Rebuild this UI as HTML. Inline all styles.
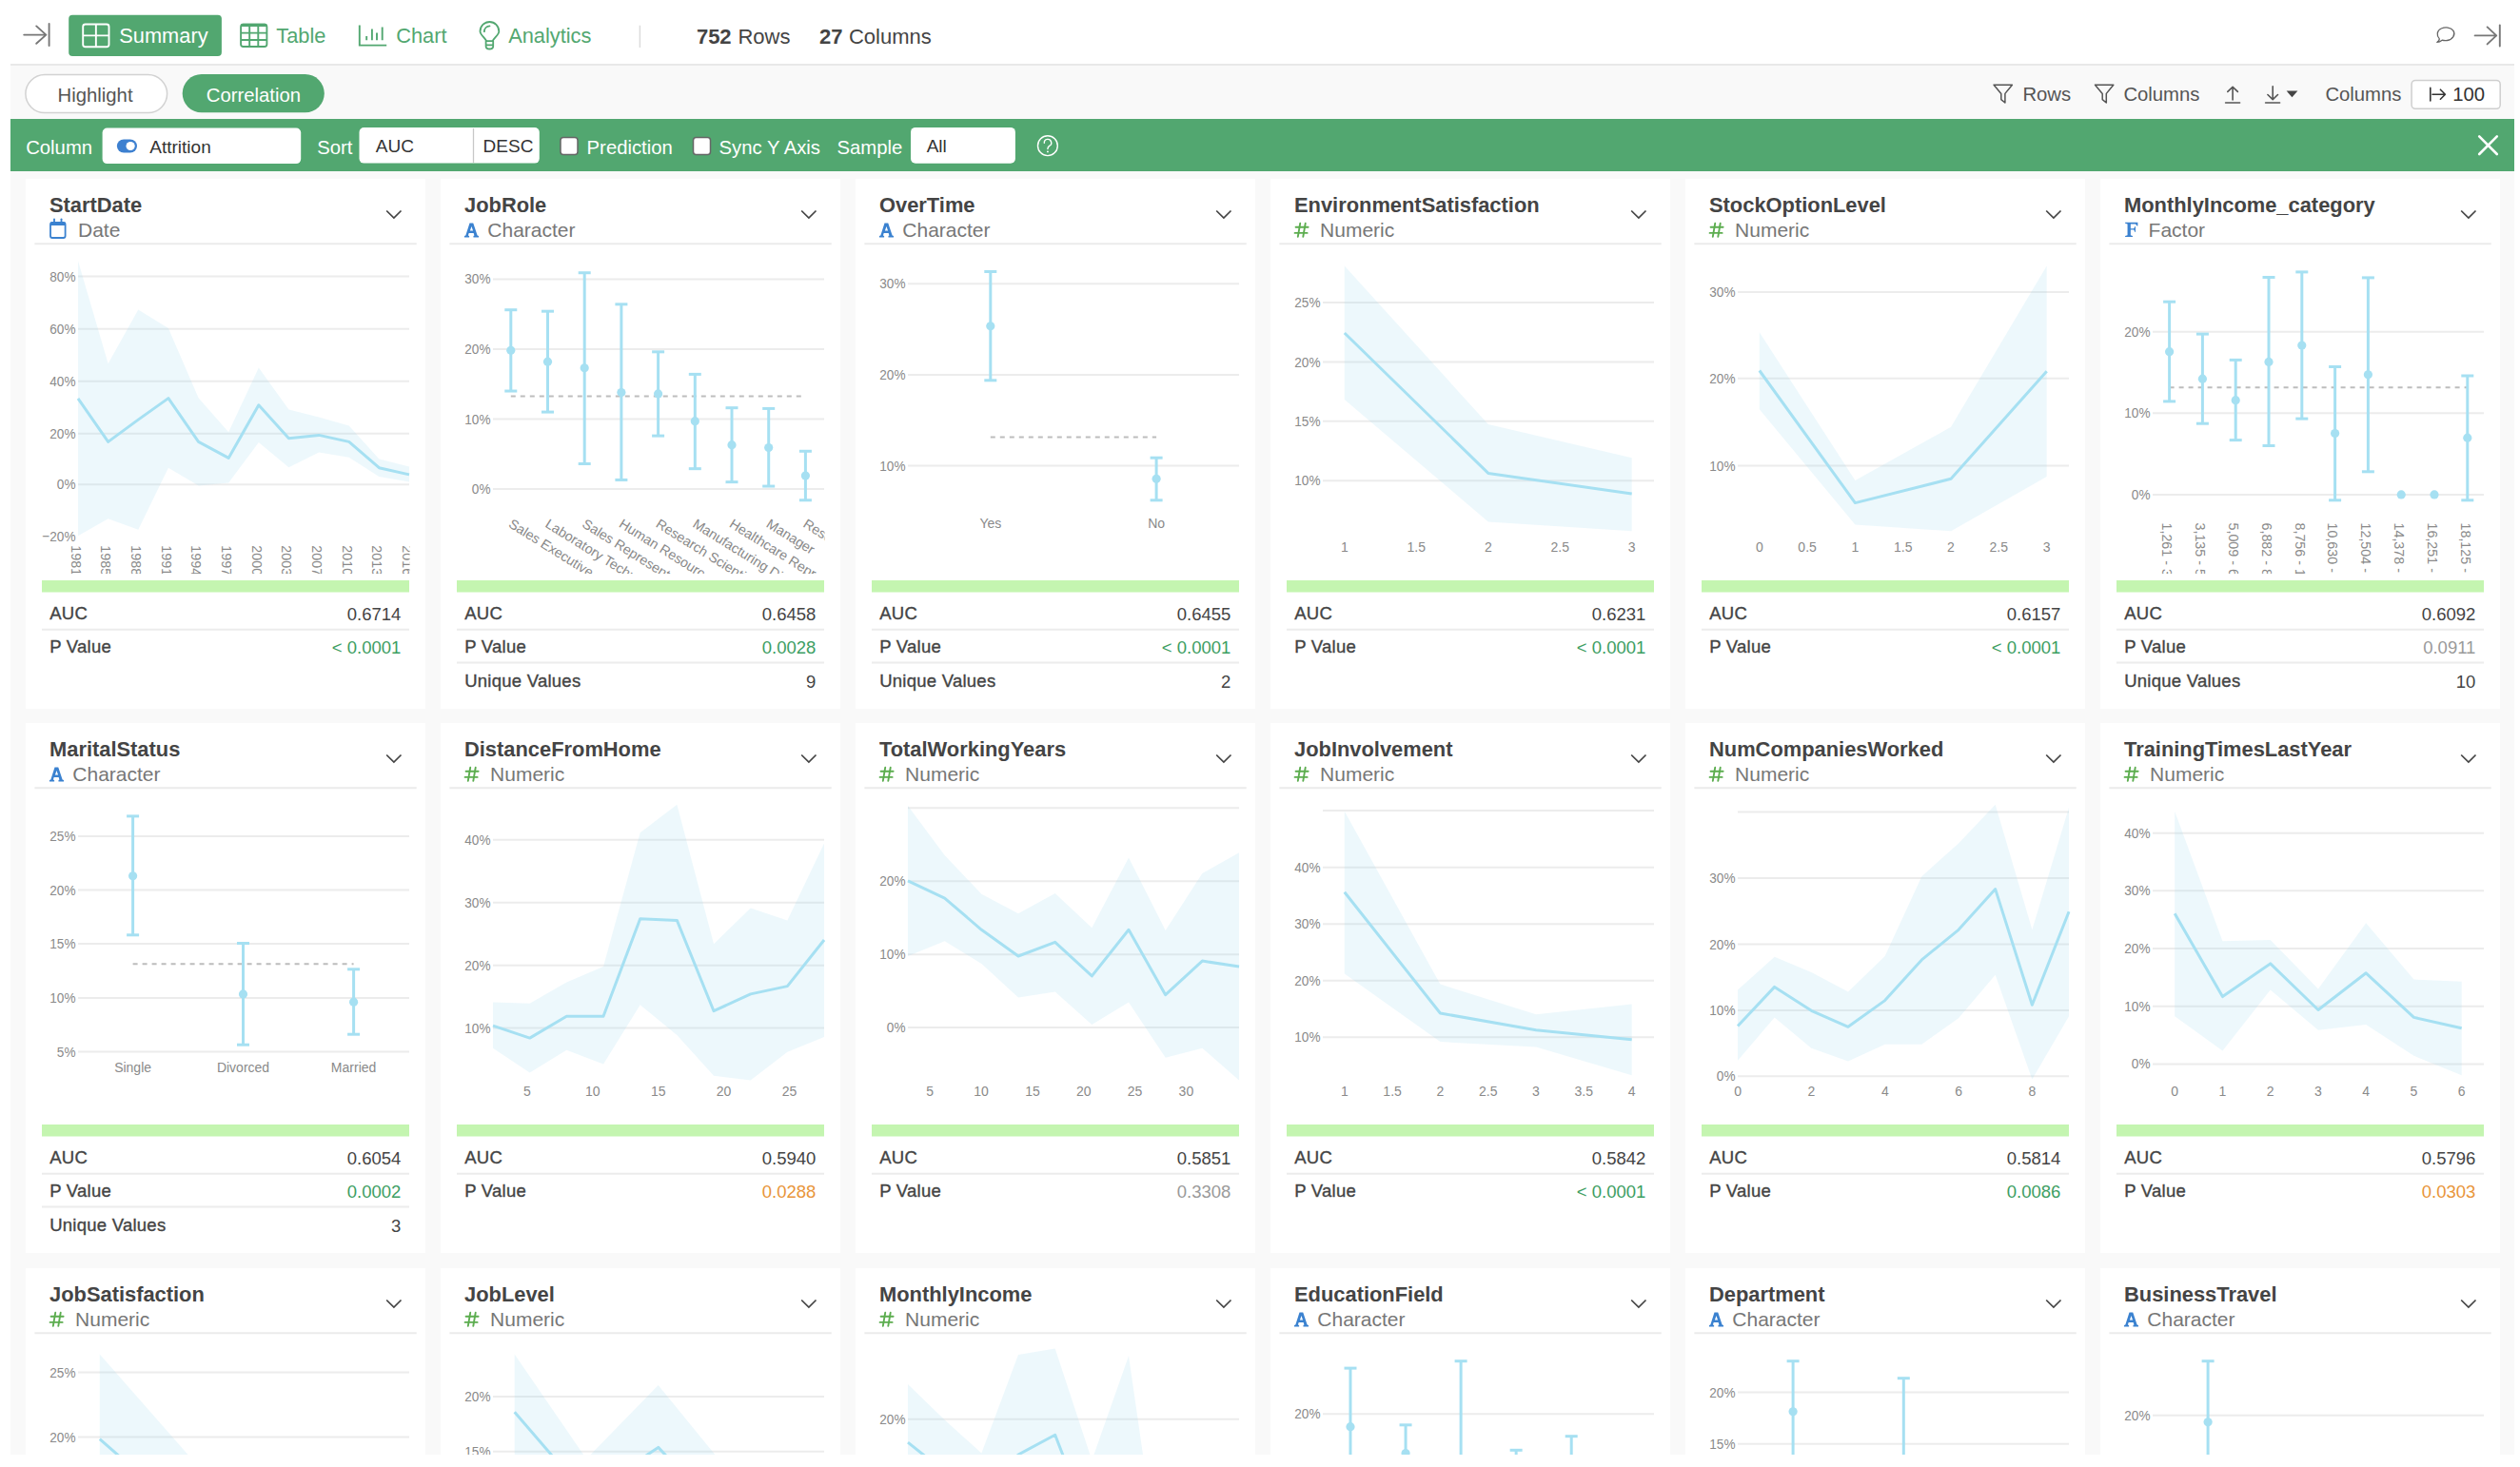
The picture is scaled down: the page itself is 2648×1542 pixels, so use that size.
<!DOCTYPE html>
<html><head><meta charset="utf-8"><title>Summary - Correlation</title>
<style>
html,body{margin:0;padding:0;background:#fff;width:2648px;height:1542px;overflow:hidden;}
body{position:relative;font-family:"Liberation Sans", sans-serif;}
svg text{font-family:"Liberation Sans", sans-serif;}
.ov{position:absolute;left:0;top:0;}
#topline{position:absolute;left:11px;top:67px;width:2631px;height:2px;background:#e8e8e8;}
#area{position:absolute;left:11px;top:69px;width:2631px;height:1460px;background:#f9f9f9;overflow:hidden;}
#gbar{position:absolute;left:11px;top:125px;width:2631px;height:55px;background:#52a770;}
#cards{position:absolute;left:0;top:0;width:2648px;height:1529px;overflow:hidden;}
.card{position:absolute;width:420px;height:557px;background:#fff;}
.card svg{position:absolute;left:0;top:0;}
.lab{stroke:#444;stroke-width:0.35px;letter-spacing:0.25px;}
</style></head><body>
<div id="area"></div>
<div id="topline"></div>
<div id="gbar"></div>
<div id="cards"><div class="card" style="left:27px;top:188px"><svg width="420" height="557" viewBox="0 0 420 557"><defs><clipPath id="c0"><rect x="0" y="70" width="410" height="345"/></clipPath><clipPath id="c0r"><rect x="0" y="70" width="403.5" height="345"/></clipPath></defs><text x="0" y="0" font-size="22.8" fill="#444" font-weight="bold" transform="translate(25.0 34.6) scale(0.96 1)">StartDate</text><g fill="none" stroke="#3b82d0"><rect x="26" y="46" width="15.6" height="16" rx="2" stroke-width="1.8"/><line x1="26" y1="47.3" x2="41.6" y2="47.3" stroke-width="3.4"/><line x1="30" y1="42.3" x2="30" y2="46" stroke-width="1.8" stroke-linecap="round"/><line x1="37.5" y1="42.3" x2="37.5" y2="46" stroke-width="1.8" stroke-linecap="round"/></g><text x="55" y="60.6" font-size="21" fill="#777" text-anchor="start" font-weight="normal">Date</text><polyline points="379.2,33.5 386.9,41.1 394.5,33.5" fill="none" stroke="#444" stroke-width="1.7"/><line x1="9.4" y1="68.3" x2="410.7" y2="68.3" stroke="#ebebeb" stroke-width="2"/><g clip-path="url(#c0)"><line x1="55" y1="102.5" x2="403" y2="102.5" stroke="#ececec" stroke-width="2"/><text x="0" y="0" font-size="13.6" fill="#8a8a8a" text-anchor="end" transform="translate(52.5 107.5) scale(1 1.12)">80%</text><line x1="55" y1="157.7" x2="403" y2="157.7" stroke="#ececec" stroke-width="2"/><text x="0" y="0" font-size="13.6" fill="#8a8a8a" text-anchor="end" transform="translate(52.5 162.7) scale(1 1.12)">60%</text><line x1="55" y1="212.7" x2="403" y2="212.7" stroke="#ececec" stroke-width="2"/><text x="0" y="0" font-size="13.6" fill="#8a8a8a" text-anchor="end" transform="translate(52.5 217.7) scale(1 1.12)">40%</text><line x1="55" y1="267.7" x2="403" y2="267.7" stroke="#ececec" stroke-width="2"/><text x="0" y="0" font-size="13.6" fill="#8a8a8a" text-anchor="end" transform="translate(52.5 272.7) scale(1 1.12)">20%</text><line x1="55" y1="321.3" x2="403" y2="321.3" stroke="#ececec" stroke-width="2"/><text x="0" y="0" font-size="13.6" fill="#8a8a8a" text-anchor="end" transform="translate(52.5 326.3) scale(1 1.12)">0%</text><text x="0" y="0" font-size="13.6" fill="#8a8a8a" text-anchor="end" transform="translate(52.5 381.3) scale(1 1.12)">−20%</text><polygon points="55,86.2 86.64,194.2 118.27,137.4 149.91,157.1 181.55,230.2 213.18,266.2 244.82,198.5 276.45,242.6 308.09,250.4 339.73,259.6 371.36,294.5 403,302.6 403,318.5 371.36,313.1 339.73,292.8 308.09,287.5 276.45,303.2 244.82,277.1 213.18,319.6 181.55,322.4 149.91,303.7 118.27,368.7 86.64,357.3 55,375.2" fill="rgba(163,220,239,0.2)"/><polyline points="55,230.8 86.64,276.4 118.27,253.1 149.91,230.6 181.55,276.4 213.18,293.4 244.82,237.8 276.45,272.7 308.09,269.4 339.73,276.4 371.36,303.7 403,310.9" fill="none" stroke="#a6e0f2" stroke-width="3" stroke-linejoin="round"/><g clip-path="url(#c0r)"><text x="0" y="0" font-size="14.3" fill="#8a8a8a" transform="translate(47.8 385.3) rotate(90)">1981-01</text><text x="0" y="0" font-size="14.3" fill="#8a8a8a" transform="translate(79.44 385.3) rotate(90)">1985-01</text><text x="0" y="0" font-size="14.3" fill="#8a8a8a" transform="translate(111.07 385.3) rotate(90)">1988-01</text><text x="0" y="0" font-size="14.3" fill="#8a8a8a" transform="translate(142.71 385.3) rotate(90)">1991-01</text><text x="0" y="0" font-size="14.3" fill="#8a8a8a" transform="translate(174.35 385.3) rotate(90)">1994-01</text><text x="0" y="0" font-size="14.3" fill="#8a8a8a" transform="translate(205.98 385.3) rotate(90)">1997-01</text><text x="0" y="0" font-size="14.3" fill="#8a8a8a" transform="translate(237.62 385.3) rotate(90)">2000-01</text><text x="0" y="0" font-size="14.3" fill="#8a8a8a" transform="translate(269.25 385.3) rotate(90)">2003-01</text><text x="0" y="0" font-size="14.3" fill="#8a8a8a" transform="translate(300.89 385.3) rotate(90)">2007-01</text><text x="0" y="0" font-size="14.3" fill="#8a8a8a" transform="translate(332.53 385.3) rotate(90)">2010-01</text><text x="0" y="0" font-size="14.3" fill="#8a8a8a" transform="translate(364.16 385.3) rotate(90)">2013-01</text><text x="0" y="0" font-size="14.3" fill="#8a8a8a" transform="translate(395.8 385.3) rotate(90)">2016-01</text></g></g><rect x="17" y="422" width="386" height="12.5" fill="#c4f5b0"/><text x="25.2" y="462.8" font-size="18.5" fill="#444" text-anchor="start" font-weight="normal" class="lab">AUC</text><text x="394.4" y="464.2" font-size="18.5" fill="#444" text-anchor="end" font-weight="normal">0.6714</text><line x1="17" y1="473.8" x2="403" y2="473.8" stroke="#ececec" stroke-width="2"/><text x="25.2" y="497.5" font-size="18.5" fill="#444" text-anchor="start" font-weight="normal" class="lab">P Value</text><text x="394.4" y="498.8" font-size="18.5" fill="#3d9e63" text-anchor="end" font-weight="normal">&lt; 0.0001</text></svg></div><div class="card" style="left:463px;top:188px"><svg width="420" height="557" viewBox="0 0 420 557"><defs><clipPath id="c1"><rect x="0" y="70" width="410" height="345"/></clipPath><clipPath id="c1r"><rect x="0" y="70" width="403.5" height="345"/></clipPath></defs><text x="0" y="0" font-size="22.8" fill="#444" font-weight="bold" transform="translate(25.0 34.6) scale(0.96 1)">JobRole</text><path d="M30.49 46.52 L34.26 46.52 L38.63 59.42 L40.02 60.02 L40.02 61.4 L34.46 61.4 L34.46 60.02 L35.45 59.42 L34.66 57.04 L29.7 57.04 L28.9 59.42 L30.1 60.02 L30.1 61.4 L24.94 61.4 L24.94 60.02 L26.33 59.42 Z M32.48 50.1 L34.06 54.46 L30.89 54.46 Z" fill="#3b82d0" fill-rule="evenodd"/><text x="49.3" y="60.6" font-size="21" fill="#777" text-anchor="start" font-weight="normal">Character</text><polyline points="379.2,33.5 386.9,41.1 394.5,33.5" fill="none" stroke="#444" stroke-width="1.7"/><line x1="9.4" y1="68.3" x2="410.7" y2="68.3" stroke="#ebebeb" stroke-width="2"/><g clip-path="url(#c1)"><line x1="55" y1="105.4" x2="403" y2="105.4" stroke="#ececec" stroke-width="2"/><text x="0" y="0" font-size="13.6" fill="#8a8a8a" text-anchor="end" transform="translate(52.5 110.4) scale(1 1.12)">30%</text><line x1="55" y1="178.9" x2="403" y2="178.9" stroke="#ececec" stroke-width="2"/><text x="0" y="0" font-size="13.6" fill="#8a8a8a" text-anchor="end" transform="translate(52.5 183.9) scale(1 1.12)">20%</text><line x1="55" y1="252.5" x2="403" y2="252.5" stroke="#ececec" stroke-width="2"/><text x="0" y="0" font-size="13.6" fill="#8a8a8a" text-anchor="end" transform="translate(52.5 257.5) scale(1 1.12)">10%</text><line x1="55" y1="326" x2="403" y2="326" stroke="#ececec" stroke-width="2"/><text x="0" y="0" font-size="13.6" fill="#8a8a8a" text-anchor="end" transform="translate(52.5 331) scale(1 1.12)">0%</text><line x1="73.8" y1="228.4" x2="381.3" y2="228.4" stroke="#bdbdbd" stroke-width="2" stroke-dasharray="5 5"/><line x1="73.8" y1="137.71" x2="73.8" y2="223.03" stroke="#a6e0f2" stroke-width="3"/><line x1="67.3" y1="137.71" x2="80.3" y2="137.71" stroke="#a6e0f2" stroke-width="3"/><line x1="67.3" y1="223.03" x2="80.3" y2="223.03" stroke="#a6e0f2" stroke-width="3"/><circle cx="73.8" cy="180.37" r="4.6" fill="#a6e0f2"/><line x1="112.5" y1="139.18" x2="112.5" y2="245.09" stroke="#a6e0f2" stroke-width="3"/><line x1="106" y1="139.18" x2="119" y2="139.18" stroke="#a6e0f2" stroke-width="3"/><line x1="106" y1="245.09" x2="119" y2="245.09" stroke="#a6e0f2" stroke-width="3"/><circle cx="112.5" cy="192.14" r="4.6" fill="#a6e0f2"/><line x1="151.2" y1="98.73" x2="151.2" y2="299.52" stroke="#a6e0f2" stroke-width="3"/><line x1="144.7" y1="98.73" x2="157.7" y2="98.73" stroke="#a6e0f2" stroke-width="3"/><line x1="144.7" y1="299.52" x2="157.7" y2="299.52" stroke="#a6e0f2" stroke-width="3"/><circle cx="151.2" cy="198.76" r="4.6" fill="#a6e0f2"/><line x1="189.9" y1="131.83" x2="189.9" y2="316.44" stroke="#a6e0f2" stroke-width="3"/><line x1="183.4" y1="131.83" x2="196.4" y2="131.83" stroke="#a6e0f2" stroke-width="3"/><line x1="183.4" y1="316.44" x2="196.4" y2="316.44" stroke="#a6e0f2" stroke-width="3"/><circle cx="189.9" cy="224.5" r="4.6" fill="#a6e0f2"/><line x1="228.6" y1="181.84" x2="228.6" y2="270.1" stroke="#a6e0f2" stroke-width="3"/><line x1="222.1" y1="181.84" x2="235.1" y2="181.84" stroke="#a6e0f2" stroke-width="3"/><line x1="222.1" y1="270.1" x2="235.1" y2="270.1" stroke="#a6e0f2" stroke-width="3"/><circle cx="228.6" cy="225.97" r="4.6" fill="#a6e0f2"/><line x1="267.3" y1="205.38" x2="267.3" y2="304.67" stroke="#a6e0f2" stroke-width="3"/><line x1="260.8" y1="205.38" x2="273.8" y2="205.38" stroke="#a6e0f2" stroke-width="3"/><line x1="260.8" y1="304.67" x2="273.8" y2="304.67" stroke="#a6e0f2" stroke-width="3"/><circle cx="267.3" cy="254.66" r="4.6" fill="#a6e0f2"/><line x1="306" y1="240.68" x2="306" y2="318.64" stroke="#a6e0f2" stroke-width="3"/><line x1="299.5" y1="240.68" x2="312.5" y2="240.68" stroke="#a6e0f2" stroke-width="3"/><line x1="299.5" y1="318.64" x2="312.5" y2="318.64" stroke="#a6e0f2" stroke-width="3"/><circle cx="306" cy="279.66" r="4.6" fill="#a6e0f2"/><line x1="344.7" y1="241.42" x2="344.7" y2="323.06" stroke="#a6e0f2" stroke-width="3"/><line x1="338.2" y1="241.42" x2="351.2" y2="241.42" stroke="#a6e0f2" stroke-width="3"/><line x1="338.2" y1="323.06" x2="351.2" y2="323.06" stroke="#a6e0f2" stroke-width="3"/><circle cx="344.7" cy="282.61" r="4.6" fill="#a6e0f2"/><line x1="383.4" y1="286.28" x2="383.4" y2="337.77" stroke="#a6e0f2" stroke-width="3"/><line x1="376.9" y1="286.28" x2="389.9" y2="286.28" stroke="#a6e0f2" stroke-width="3"/><line x1="376.9" y1="337.77" x2="389.9" y2="337.77" stroke="#a6e0f2" stroke-width="3"/><circle cx="383.4" cy="312.03" r="4.6" fill="#a6e0f2"/><g clip-path="url(#c1r)"><text x="0" y="0" font-size="14.3" fill="#8a8a8a" transform="translate(70.4 365.2) rotate(32)">Sales Executive</text><text x="0" y="0" font-size="14.3" fill="#8a8a8a" transform="translate(109.1 365.2) rotate(32)">Laboratory Technician</text><text x="0" y="0" font-size="14.3" fill="#8a8a8a" transform="translate(147.8 365.2) rotate(32)">Sales Representative</text><text x="0" y="0" font-size="14.3" fill="#8a8a8a" transform="translate(186.5 365.2) rotate(32)">Human Resources</text><text x="0" y="0" font-size="14.3" fill="#8a8a8a" transform="translate(225.2 365.2) rotate(32)">Research Scientist</text><text x="0" y="0" font-size="14.3" fill="#8a8a8a" transform="translate(263.9 365.2) rotate(32)">Manufacturing Director</text><text x="0" y="0" font-size="14.3" fill="#8a8a8a" transform="translate(302.6 365.2) rotate(32)">Healthcare Representative</text><text x="0" y="0" font-size="14.3" fill="#8a8a8a" transform="translate(341.3 365.2) rotate(32)">Manager</text><text x="0" y="0" font-size="14.3" fill="#8a8a8a" transform="translate(380 365.2) rotate(32)">Research Director</text></g></g><rect x="17" y="422" width="386" height="12.5" fill="#c4f5b0"/><text x="25.2" y="462.8" font-size="18.5" fill="#444" text-anchor="start" font-weight="normal" class="lab">AUC</text><text x="394.4" y="464.2" font-size="18.5" fill="#444" text-anchor="end" font-weight="normal">0.6458</text><line x1="17" y1="473.8" x2="403" y2="473.8" stroke="#ececec" stroke-width="2"/><text x="25.2" y="497.5" font-size="18.5" fill="#444" text-anchor="start" font-weight="normal" class="lab">P Value</text><text x="394.4" y="498.8" font-size="18.5" fill="#3d9e63" text-anchor="end" font-weight="normal">0.0028</text><line x1="17" y1="508.4" x2="403" y2="508.4" stroke="#ececec" stroke-width="2"/><text x="25.2" y="533.6" font-size="18.5" fill="#444" text-anchor="start" font-weight="normal" class="lab">Unique Values</text><text x="394.4" y="534.6" font-size="18.5" fill="#444" text-anchor="end" font-weight="normal">9</text></svg></div><div class="card" style="left:899px;top:188px"><svg width="420" height="557" viewBox="0 0 420 557"><defs><clipPath id="c2"><rect x="0" y="70" width="410" height="345"/></clipPath><clipPath id="c2r"><rect x="0" y="70" width="403.5" height="345"/></clipPath></defs><text x="0" y="0" font-size="22.8" fill="#444" font-weight="bold" transform="translate(25.0 34.6) scale(0.96 1)">OverTime</text><path d="M30.49 46.52 L34.26 46.52 L38.63 59.42 L40.02 60.02 L40.02 61.4 L34.46 61.4 L34.46 60.02 L35.45 59.42 L34.66 57.04 L29.7 57.04 L28.9 59.42 L30.1 60.02 L30.1 61.4 L24.94 61.4 L24.94 60.02 L26.33 59.42 Z M32.48 50.1 L34.06 54.46 L30.89 54.46 Z" fill="#3b82d0" fill-rule="evenodd"/><text x="49.3" y="60.6" font-size="21" fill="#777" text-anchor="start" font-weight="normal">Character</text><polyline points="379.2,33.5 386.9,41.1 394.5,33.5" fill="none" stroke="#444" stroke-width="1.7"/><line x1="9.4" y1="68.3" x2="410.7" y2="68.3" stroke="#ebebeb" stroke-width="2"/><g clip-path="url(#c2)"><line x1="55" y1="110.2" x2="403" y2="110.2" stroke="#ececec" stroke-width="2"/><text x="0" y="0" font-size="13.6" fill="#8a8a8a" text-anchor="end" transform="translate(52.5 115.2) scale(1 1.12)">30%</text><line x1="55" y1="205.9" x2="403" y2="205.9" stroke="#ececec" stroke-width="2"/><text x="0" y="0" font-size="13.6" fill="#8a8a8a" text-anchor="end" transform="translate(52.5 210.9) scale(1 1.12)">20%</text><line x1="55" y1="301.5" x2="403" y2="301.5" stroke="#ececec" stroke-width="2"/><text x="0" y="0" font-size="13.6" fill="#8a8a8a" text-anchor="end" transform="translate(52.5 306.5) scale(1 1.12)">10%</text><line x1="141.8" y1="271.4" x2="316.1" y2="271.4" stroke="#bdbdbd" stroke-width="2" stroke-dasharray="5 5"/><line x1="141.8" y1="97.5" x2="141.8" y2="211.8" stroke="#a6e0f2" stroke-width="3"/><line x1="135.3" y1="97.5" x2="148.3" y2="97.5" stroke="#a6e0f2" stroke-width="3"/><line x1="135.3" y1="211.8" x2="148.3" y2="211.8" stroke="#a6e0f2" stroke-width="3"/><circle cx="141.8" cy="154.8" r="4.6" fill="#a6e0f2"/><line x1="316.1" y1="293.2" x2="316.1" y2="337.8" stroke="#a6e0f2" stroke-width="3"/><line x1="309.6" y1="293.2" x2="322.6" y2="293.2" stroke="#a6e0f2" stroke-width="3"/><line x1="309.6" y1="337.8" x2="322.6" y2="337.8" stroke="#a6e0f2" stroke-width="3"/><circle cx="316.1" cy="315.3" r="4.6" fill="#a6e0f2"/><text x="141.8" y="366.6" font-size="14" fill="#8a8a8a" text-anchor="middle" font-weight="normal">Yes</text><text x="316.1" y="366.6" font-size="14" fill="#8a8a8a" text-anchor="middle" font-weight="normal">No</text></g><rect x="17" y="422" width="386" height="12.5" fill="#c4f5b0"/><text x="25.2" y="462.8" font-size="18.5" fill="#444" text-anchor="start" font-weight="normal" class="lab">AUC</text><text x="394.4" y="464.2" font-size="18.5" fill="#444" text-anchor="end" font-weight="normal">0.6455</text><line x1="17" y1="473.8" x2="403" y2="473.8" stroke="#ececec" stroke-width="2"/><text x="25.2" y="497.5" font-size="18.5" fill="#444" text-anchor="start" font-weight="normal" class="lab">P Value</text><text x="394.4" y="498.8" font-size="18.5" fill="#3d9e63" text-anchor="end" font-weight="normal">&lt; 0.0001</text><line x1="17" y1="508.4" x2="403" y2="508.4" stroke="#ececec" stroke-width="2"/><text x="25.2" y="533.6" font-size="18.5" fill="#444" text-anchor="start" font-weight="normal" class="lab">Unique Values</text><text x="394.4" y="534.6" font-size="18.5" fill="#444" text-anchor="end" font-weight="normal">2</text></svg></div><div class="card" style="left:1335px;top:188px"><svg width="420" height="557" viewBox="0 0 420 557"><defs><clipPath id="c3"><rect x="0" y="70" width="410" height="345"/></clipPath><clipPath id="c3r"><rect x="0" y="70" width="403.5" height="345"/></clipPath></defs><text x="0" y="0" font-size="22.8" fill="#444" font-weight="bold" transform="translate(25.0 34.6) scale(0.96 1)">EnvironmentSatisfaction</text><g stroke="#5cad4f" stroke-width="1.9" stroke-linecap="round" fill="none"><line x1="31.2" y1="46.8" x2="28.8" y2="60.9"/><line x1="36.7" y1="46.8" x2="34.3" y2="60.9"/><line x1="26.6" y1="50.8" x2="39.6" y2="50.8"/><line x1="25.6" y1="56.9" x2="38.6" y2="56.9"/></g><text x="52.1" y="60.6" font-size="21" fill="#777" text-anchor="start" font-weight="normal">Numeric</text><polyline points="379.2,33.5 386.9,41.1 394.5,33.5" fill="none" stroke="#444" stroke-width="1.7"/><line x1="9.4" y1="68.3" x2="410.7" y2="68.3" stroke="#ebebeb" stroke-width="2"/><g clip-path="url(#c3)"><line x1="55" y1="129.9" x2="403" y2="129.9" stroke="#ececec" stroke-width="2"/><text x="0" y="0" font-size="13.6" fill="#8a8a8a" text-anchor="end" transform="translate(52.5 134.9) scale(1 1.12)">25%</text><line x1="55" y1="192.5" x2="403" y2="192.5" stroke="#ececec" stroke-width="2"/><text x="0" y="0" font-size="13.6" fill="#8a8a8a" text-anchor="end" transform="translate(52.5 197.5) scale(1 1.12)">20%</text><line x1="55" y1="254.7" x2="403" y2="254.7" stroke="#ececec" stroke-width="2"/><text x="0" y="0" font-size="13.6" fill="#8a8a8a" text-anchor="end" transform="translate(52.5 259.7) scale(1 1.12)">15%</text><line x1="55" y1="317.2" x2="403" y2="317.2" stroke="#ececec" stroke-width="2"/><text x="0" y="0" font-size="13.6" fill="#8a8a8a" text-anchor="end" transform="translate(52.5 322.2) scale(1 1.12)">10%</text><polygon points="77.8,91.6 228.8,258 379.7,293.2 379.7,370.3 228.8,360.4 77.8,231.9" fill="rgba(163,220,239,0.2)"/><polyline points="77.8,162 228.8,309.4 379.7,331.1" fill="none" stroke="#a6e0f2" stroke-width="3" stroke-linejoin="round"/><text x="77.8" y="392" font-size="14" fill="#8a8a8a" text-anchor="middle" font-weight="normal">1</text><text x="153.3" y="392" font-size="14" fill="#8a8a8a" text-anchor="middle" font-weight="normal">1.5</text><text x="228.8" y="392" font-size="14" fill="#8a8a8a" text-anchor="middle" font-weight="normal">2</text><text x="304.2" y="392" font-size="14" fill="#8a8a8a" text-anchor="middle" font-weight="normal">2.5</text><text x="379.7" y="392" font-size="14" fill="#8a8a8a" text-anchor="middle" font-weight="normal">3</text></g><rect x="17" y="422" width="386" height="12.5" fill="#c4f5b0"/><text x="25.2" y="462.8" font-size="18.5" fill="#444" text-anchor="start" font-weight="normal" class="lab">AUC</text><text x="394.4" y="464.2" font-size="18.5" fill="#444" text-anchor="end" font-weight="normal">0.6231</text><line x1="17" y1="473.8" x2="403" y2="473.8" stroke="#ececec" stroke-width="2"/><text x="25.2" y="497.5" font-size="18.5" fill="#444" text-anchor="start" font-weight="normal" class="lab">P Value</text><text x="394.4" y="498.8" font-size="18.5" fill="#3d9e63" text-anchor="end" font-weight="normal">&lt; 0.0001</text></svg></div><div class="card" style="left:1771px;top:188px"><svg width="420" height="557" viewBox="0 0 420 557"><defs><clipPath id="c4"><rect x="0" y="70" width="410" height="345"/></clipPath><clipPath id="c4r"><rect x="0" y="70" width="403.5" height="345"/></clipPath></defs><text x="0" y="0" font-size="22.8" fill="#444" font-weight="bold" transform="translate(25.0 34.6) scale(0.96 1)">StockOptionLevel</text><g stroke="#5cad4f" stroke-width="1.9" stroke-linecap="round" fill="none"><line x1="31.2" y1="46.8" x2="28.8" y2="60.9"/><line x1="36.7" y1="46.8" x2="34.3" y2="60.9"/><line x1="26.6" y1="50.8" x2="39.6" y2="50.8"/><line x1="25.6" y1="56.9" x2="38.6" y2="56.9"/></g><text x="52.1" y="60.6" font-size="21" fill="#777" text-anchor="start" font-weight="normal">Numeric</text><polyline points="379.2,33.5 386.9,41.1 394.5,33.5" fill="none" stroke="#444" stroke-width="1.7"/><line x1="9.4" y1="68.3" x2="410.7" y2="68.3" stroke="#ebebeb" stroke-width="2"/><g clip-path="url(#c4)"><line x1="55" y1="118.9" x2="403" y2="118.9" stroke="#ececec" stroke-width="2"/><text x="0" y="0" font-size="13.6" fill="#8a8a8a" text-anchor="end" transform="translate(52.5 123.9) scale(1 1.12)">30%</text><line x1="55" y1="209.8" x2="403" y2="209.8" stroke="#ececec" stroke-width="2"/><text x="0" y="0" font-size="13.6" fill="#8a8a8a" text-anchor="end" transform="translate(52.5 214.8) scale(1 1.12)">20%</text><line x1="55" y1="301.5" x2="403" y2="301.5" stroke="#ececec" stroke-width="2"/><text x="0" y="0" font-size="13.6" fill="#8a8a8a" text-anchor="end" transform="translate(52.5 306.5) scale(1 1.12)">10%</text><polygon points="77.8,161.2 178.4,316.9 279.1,260.8 379.7,91.6 379.7,313 279.1,370.3 178.4,363.5 77.8,242.2" fill="rgba(163,220,239,0.2)"/><polyline points="77.8,201.5 178.4,340.6 279.1,315.3 379.7,202.3" fill="none" stroke="#a6e0f2" stroke-width="3" stroke-linejoin="round"/><text x="77.8" y="392" font-size="14" fill="#8a8a8a" text-anchor="middle" font-weight="normal">0</text><text x="128.1" y="392" font-size="14" fill="#8a8a8a" text-anchor="middle" font-weight="normal">0.5</text><text x="178.4" y="392" font-size="14" fill="#8a8a8a" text-anchor="middle" font-weight="normal">1</text><text x="228.7" y="392" font-size="14" fill="#8a8a8a" text-anchor="middle" font-weight="normal">1.5</text><text x="279" y="392" font-size="14" fill="#8a8a8a" text-anchor="middle" font-weight="normal">2</text><text x="329.3" y="392" font-size="14" fill="#8a8a8a" text-anchor="middle" font-weight="normal">2.5</text><text x="379.6" y="392" font-size="14" fill="#8a8a8a" text-anchor="middle" font-weight="normal">3</text></g><rect x="17" y="422" width="386" height="12.5" fill="#c4f5b0"/><text x="25.2" y="462.8" font-size="18.5" fill="#444" text-anchor="start" font-weight="normal" class="lab">AUC</text><text x="394.4" y="464.2" font-size="18.5" fill="#444" text-anchor="end" font-weight="normal">0.6157</text><line x1="17" y1="473.8" x2="403" y2="473.8" stroke="#ececec" stroke-width="2"/><text x="25.2" y="497.5" font-size="18.5" fill="#444" text-anchor="start" font-weight="normal" class="lab">P Value</text><text x="394.4" y="498.8" font-size="18.5" fill="#3d9e63" text-anchor="end" font-weight="normal">&lt; 0.0001</text></svg></div><div class="card" style="left:2207px;top:188px"><svg width="420" height="557" viewBox="0 0 420 557"><defs><clipPath id="c5"><rect x="0" y="70" width="410" height="345"/></clipPath><clipPath id="c5r"><rect x="0" y="70" width="403.5" height="345"/></clipPath></defs><text x="0" y="0" font-size="22.8" fill="#444" font-weight="bold" transform="translate(25.0 34.6) scale(0.96 1)">MonthlyIncome_category</text><path d="M26.1 45.73 L39.39 45.73 L39.39 49.62 L38.6 49.62 L37.01 47.4 L31.85 47.4 L31.85 52.16 L35.22 52.16 L36.49 50.1 L37.01 50.1 L37.01 55.97 L36.49 55.97 L35.22 53.59 L31.85 53.59 L31.85 59.14 L33.95 59.94 L33.95 60.89 L26.1 60.89 L26.1 59.94 L28.56 59.14 L28.56 47.4 L26.1 46.72 Z" fill="#3b82d0"/><text x="50.6" y="60.6" font-size="21" fill="#777" text-anchor="start" font-weight="normal">Factor</text><polyline points="379.2,33.5 386.9,41.1 394.5,33.5" fill="none" stroke="#444" stroke-width="1.7"/><line x1="9.4" y1="68.3" x2="410.7" y2="68.3" stroke="#ebebeb" stroke-width="2"/><g clip-path="url(#c5)"><line x1="55" y1="160.8" x2="403" y2="160.8" stroke="#ececec" stroke-width="2"/><text x="0" y="0" font-size="13.6" fill="#8a8a8a" text-anchor="end" transform="translate(52.5 165.8) scale(1 1.12)">20%</text><line x1="55" y1="246.3" x2="403" y2="246.3" stroke="#ececec" stroke-width="2"/><text x="0" y="0" font-size="13.6" fill="#8a8a8a" text-anchor="end" transform="translate(52.5 251.3) scale(1 1.12)">10%</text><line x1="55" y1="331.9" x2="403" y2="331.9" stroke="#ececec" stroke-width="2"/><text x="0" y="0" font-size="13.6" fill="#8a8a8a" text-anchor="end" transform="translate(52.5 336.9) scale(1 1.12)">0%</text><line x1="72.6" y1="219.3" x2="385.8" y2="219.3" stroke="#bdbdbd" stroke-width="2" stroke-dasharray="5 5"/><line x1="72.6" y1="129.2" x2="72.6" y2="233.9" stroke="#a6e0f2" stroke-width="3"/><line x1="66.1" y1="129.2" x2="79.1" y2="129.2" stroke="#a6e0f2" stroke-width="3"/><line x1="66.1" y1="233.9" x2="79.1" y2="233.9" stroke="#a6e0f2" stroke-width="3"/><circle cx="72.6" cy="181.7" r="4.6" fill="#a6e0f2"/><line x1="107.4" y1="163.1" x2="107.4" y2="257.2" stroke="#a6e0f2" stroke-width="3"/><line x1="100.9" y1="163.1" x2="113.9" y2="163.1" stroke="#a6e0f2" stroke-width="3"/><line x1="100.9" y1="257.2" x2="113.9" y2="257.2" stroke="#a6e0f2" stroke-width="3"/><circle cx="107.4" cy="210.2" r="4.6" fill="#a6e0f2"/><line x1="142.2" y1="190.4" x2="142.2" y2="274.6" stroke="#a6e0f2" stroke-width="3"/><line x1="135.7" y1="190.4" x2="148.7" y2="190.4" stroke="#a6e0f2" stroke-width="3"/><line x1="135.7" y1="274.6" x2="148.7" y2="274.6" stroke="#a6e0f2" stroke-width="3"/><circle cx="142.2" cy="232.7" r="4.6" fill="#a6e0f2"/><line x1="177" y1="103.5" x2="177" y2="280.5" stroke="#a6e0f2" stroke-width="3"/><line x1="170.5" y1="103.5" x2="183.5" y2="103.5" stroke="#a6e0f2" stroke-width="3"/><line x1="170.5" y1="280.5" x2="183.5" y2="280.5" stroke="#a6e0f2" stroke-width="3"/><circle cx="177" cy="192.4" r="4.6" fill="#a6e0f2"/><line x1="211.8" y1="97.9" x2="211.8" y2="252.1" stroke="#a6e0f2" stroke-width="3"/><line x1="205.3" y1="97.9" x2="218.3" y2="97.9" stroke="#a6e0f2" stroke-width="3"/><line x1="205.3" y1="252.1" x2="218.3" y2="252.1" stroke="#a6e0f2" stroke-width="3"/><circle cx="211.8" cy="175" r="4.6" fill="#a6e0f2"/><line x1="246.6" y1="197.5" x2="246.6" y2="337.8" stroke="#a6e0f2" stroke-width="3"/><line x1="240.1" y1="197.5" x2="253.1" y2="197.5" stroke="#a6e0f2" stroke-width="3"/><line x1="240.1" y1="337.8" x2="253.1" y2="337.8" stroke="#a6e0f2" stroke-width="3"/><circle cx="246.6" cy="267.5" r="4.6" fill="#a6e0f2"/><line x1="281.4" y1="103.9" x2="281.4" y2="307.8" stroke="#a6e0f2" stroke-width="3"/><line x1="274.9" y1="103.9" x2="287.9" y2="103.9" stroke="#a6e0f2" stroke-width="3"/><line x1="274.9" y1="307.8" x2="287.9" y2="307.8" stroke="#a6e0f2" stroke-width="3"/><circle cx="281.4" cy="205.8" r="4.6" fill="#a6e0f2"/><circle cx="316.2" cy="331.9" r="4.6" fill="#a6e0f2"/><circle cx="351" cy="331.9" r="4.6" fill="#a6e0f2"/><line x1="385.8" y1="207" x2="385.8" y2="337.8" stroke="#a6e0f2" stroke-width="3"/><line x1="379.3" y1="207" x2="392.3" y2="207" stroke="#a6e0f2" stroke-width="3"/><line x1="379.3" y1="337.8" x2="392.3" y2="337.8" stroke="#a6e0f2" stroke-width="3"/><circle cx="385.8" cy="272.2" r="4.6" fill="#a6e0f2"/><g clip-path="url(#c5r)"><text x="0" y="0" font-size="14.3" fill="#8a8a8a" transform="translate(65.4 361.5) rotate(90)">1,261 - 3,135</text><text x="0" y="0" font-size="14.3" fill="#8a8a8a" transform="translate(100.2 361.5) rotate(90)">3,135 - 5,009</text><text x="0" y="0" font-size="14.3" fill="#8a8a8a" transform="translate(135 361.5) rotate(90)">5,009 - 6,882</text><text x="0" y="0" font-size="14.3" fill="#8a8a8a" transform="translate(169.8 361.5) rotate(90)">6,882 - 8,756</text><text x="0" y="0" font-size="14.3" fill="#8a8a8a" transform="translate(204.6 361.5) rotate(90)">8,756 - 10,630</text><text x="0" y="0" font-size="14.3" fill="#8a8a8a" transform="translate(239.4 361.5) rotate(90)">10,630 - 12,504</text><text x="0" y="0" font-size="14.3" fill="#8a8a8a" transform="translate(274.2 361.5) rotate(90)">12,504 - 14,378</text><text x="0" y="0" font-size="14.3" fill="#8a8a8a" transform="translate(309 361.5) rotate(90)">14,378 - 16,251</text><text x="0" y="0" font-size="14.3" fill="#8a8a8a" transform="translate(343.8 361.5) rotate(90)">16,251 - 18,125</text><text x="0" y="0" font-size="14.3" fill="#8a8a8a" transform="translate(378.6 361.5) rotate(90)">18,125 - 19,999</text></g></g><rect x="17" y="422" width="386" height="12.5" fill="#c4f5b0"/><text x="25.2" y="462.8" font-size="18.5" fill="#444" text-anchor="start" font-weight="normal" class="lab">AUC</text><text x="394.4" y="464.2" font-size="18.5" fill="#444" text-anchor="end" font-weight="normal">0.6092</text><line x1="17" y1="473.8" x2="403" y2="473.8" stroke="#ececec" stroke-width="2"/><text x="25.2" y="497.5" font-size="18.5" fill="#444" text-anchor="start" font-weight="normal" class="lab">P Value</text><text x="394.4" y="498.8" font-size="18.5" fill="#9a9a9a" text-anchor="end" font-weight="normal">0.0911</text><line x1="17" y1="508.4" x2="403" y2="508.4" stroke="#ececec" stroke-width="2"/><text x="25.2" y="533.6" font-size="18.5" fill="#444" text-anchor="start" font-weight="normal" class="lab">Unique Values</text><text x="394.4" y="534.6" font-size="18.5" fill="#444" text-anchor="end" font-weight="normal">10</text></svg></div><div class="card" style="left:27px;top:760px"><svg width="420" height="557" viewBox="0 0 420 557"><defs><clipPath id="c6"><rect x="0" y="70" width="410" height="345"/></clipPath><clipPath id="c6r"><rect x="0" y="70" width="403.5" height="345"/></clipPath></defs><text x="0" y="0" font-size="22.8" fill="#444" font-weight="bold" transform="translate(25.0 34.6) scale(0.96 1)">MaritalStatus</text><path d="M30.49 46.52 L34.26 46.52 L38.63 59.42 L40.02 60.02 L40.02 61.4 L34.46 61.4 L34.46 60.02 L35.45 59.42 L34.66 57.04 L29.7 57.04 L28.9 59.42 L30.1 60.02 L30.1 61.4 L24.94 61.4 L24.94 60.02 L26.33 59.42 Z M32.48 50.1 L34.06 54.46 L30.89 54.46 Z" fill="#3b82d0" fill-rule="evenodd"/><text x="49.3" y="60.6" font-size="21" fill="#777" text-anchor="start" font-weight="normal">Character</text><polyline points="379.2,33.5 386.9,41.1 394.5,33.5" fill="none" stroke="#444" stroke-width="1.7"/><line x1="9.4" y1="68.3" x2="410.7" y2="68.3" stroke="#ebebeb" stroke-width="2"/><g clip-path="url(#c6)"><line x1="55" y1="118.9" x2="403" y2="118.9" stroke="#ececec" stroke-width="2"/><text x="0" y="0" font-size="13.6" fill="#8a8a8a" text-anchor="end" transform="translate(52.5 123.9) scale(1 1.12)">25%</text><line x1="55" y1="175.5" x2="403" y2="175.5" stroke="#ececec" stroke-width="2"/><text x="0" y="0" font-size="13.6" fill="#8a8a8a" text-anchor="end" transform="translate(52.5 180.5) scale(1 1.12)">20%</text><line x1="55" y1="232.1" x2="403" y2="232.1" stroke="#ececec" stroke-width="2"/><text x="0" y="0" font-size="13.6" fill="#8a8a8a" text-anchor="end" transform="translate(52.5 237.1) scale(1 1.12)">15%</text><line x1="55" y1="288.9" x2="403" y2="288.9" stroke="#ececec" stroke-width="2"/><text x="0" y="0" font-size="13.6" fill="#8a8a8a" text-anchor="end" transform="translate(52.5 293.9) scale(1 1.12)">10%</text><line x1="55" y1="345.6" x2="403" y2="345.6" stroke="#ececec" stroke-width="2"/><text x="0" y="0" font-size="13.6" fill="#8a8a8a" text-anchor="end" transform="translate(52.5 350.6) scale(1 1.12)">5%</text><line x1="112.6" y1="253.3" x2="344.6" y2="253.3" stroke="#bdbdbd" stroke-width="2" stroke-dasharray="5 5"/><line x1="112.6" y1="97.9" x2="112.6" y2="222.8" stroke="#a6e0f2" stroke-width="3"/><line x1="106.1" y1="97.9" x2="119.1" y2="97.9" stroke="#a6e0f2" stroke-width="3"/><line x1="106.1" y1="222.8" x2="119.1" y2="222.8" stroke="#a6e0f2" stroke-width="3"/><circle cx="112.6" cy="160.8" r="4.6" fill="#a6e0f2"/><line x1="228.5" y1="231.5" x2="228.5" y2="338.2" stroke="#a6e0f2" stroke-width="3"/><line x1="222" y1="231.5" x2="235" y2="231.5" stroke="#a6e0f2" stroke-width="3"/><line x1="222" y1="338.2" x2="235" y2="338.2" stroke="#a6e0f2" stroke-width="3"/><circle cx="228.5" cy="284.9" r="4.6" fill="#a6e0f2"/><line x1="344.6" y1="258.8" x2="344.6" y2="327.2" stroke="#a6e0f2" stroke-width="3"/><line x1="338.1" y1="258.8" x2="351.1" y2="258.8" stroke="#a6e0f2" stroke-width="3"/><line x1="338.1" y1="327.2" x2="351.1" y2="327.2" stroke="#a6e0f2" stroke-width="3"/><circle cx="344.6" cy="293.2" r="4.6" fill="#a6e0f2"/><text x="112.6" y="367.4" font-size="14" fill="#8a8a8a" text-anchor="middle" font-weight="normal">Single</text><text x="228.5" y="367.4" font-size="14" fill="#8a8a8a" text-anchor="middle" font-weight="normal">Divorced</text><text x="344.6" y="367.4" font-size="14" fill="#8a8a8a" text-anchor="middle" font-weight="normal">Married</text></g><rect x="17" y="422" width="386" height="12.5" fill="#c4f5b0"/><text x="25.2" y="462.8" font-size="18.5" fill="#444" text-anchor="start" font-weight="normal" class="lab">AUC</text><text x="394.4" y="464.2" font-size="18.5" fill="#444" text-anchor="end" font-weight="normal">0.6054</text><line x1="17" y1="473.8" x2="403" y2="473.8" stroke="#ececec" stroke-width="2"/><text x="25.2" y="497.5" font-size="18.5" fill="#444" text-anchor="start" font-weight="normal" class="lab">P Value</text><text x="394.4" y="498.8" font-size="18.5" fill="#3d9e63" text-anchor="end" font-weight="normal">0.0002</text><line x1="17" y1="508.4" x2="403" y2="508.4" stroke="#ececec" stroke-width="2"/><text x="25.2" y="533.6" font-size="18.5" fill="#444" text-anchor="start" font-weight="normal" class="lab">Unique Values</text><text x="394.4" y="534.6" font-size="18.5" fill="#444" text-anchor="end" font-weight="normal">3</text></svg></div><div class="card" style="left:463px;top:760px"><svg width="420" height="557" viewBox="0 0 420 557"><defs><clipPath id="c7"><rect x="0" y="70" width="410" height="345"/></clipPath><clipPath id="c7r"><rect x="0" y="70" width="403.5" height="345"/></clipPath></defs><text x="0" y="0" font-size="22.8" fill="#444" font-weight="bold" transform="translate(25.0 34.6) scale(0.96 1)">DistanceFromHome</text><g stroke="#5cad4f" stroke-width="1.9" stroke-linecap="round" fill="none"><line x1="31.2" y1="46.8" x2="28.8" y2="60.9"/><line x1="36.7" y1="46.8" x2="34.3" y2="60.9"/><line x1="26.6" y1="50.8" x2="39.6" y2="50.8"/><line x1="25.6" y1="56.9" x2="38.6" y2="56.9"/></g><text x="52.1" y="60.6" font-size="21" fill="#777" text-anchor="start" font-weight="normal">Numeric</text><polyline points="379.2,33.5 386.9,41.1 394.5,33.5" fill="none" stroke="#444" stroke-width="1.7"/><line x1="9.4" y1="68.3" x2="410.7" y2="68.3" stroke="#ebebeb" stroke-width="2"/><g clip-path="url(#c7)"><line x1="55" y1="122.8" x2="403" y2="122.8" stroke="#ececec" stroke-width="2"/><text x="0" y="0" font-size="13.6" fill="#8a8a8a" text-anchor="end" transform="translate(52.5 127.8) scale(1 1.12)">40%</text><line x1="55" y1="188.8" x2="403" y2="188.8" stroke="#ececec" stroke-width="2"/><text x="0" y="0" font-size="13.6" fill="#8a8a8a" text-anchor="end" transform="translate(52.5 193.8) scale(1 1.12)">30%</text><line x1="55" y1="254.8" x2="403" y2="254.8" stroke="#ececec" stroke-width="2"/><text x="0" y="0" font-size="13.6" fill="#8a8a8a" text-anchor="end" transform="translate(52.5 259.8) scale(1 1.12)">20%</text><line x1="55" y1="320.5" x2="403" y2="320.5" stroke="#ececec" stroke-width="2"/><text x="0" y="0" font-size="13.6" fill="#8a8a8a" text-anchor="end" transform="translate(52.5 325.5) scale(1 1.12)">10%</text><polygon points="55,293.6 93.67,294.8 132.34,272.6 171.01,256 209.68,115.3 248.35,85.7 287.02,232.3 325.69,194.4 364.36,207.4 403.03,126.4 403.03,330 364.36,345.8 325.69,375.4 287.02,370.7 248.35,328 209.68,296.3 171.01,358.4 132.34,343.8 93.67,367.5 55,341.8" fill="rgba(163,220,239,0.2)"/><polyline points="55,318.1 93.67,331.1 132.34,308.2 171.01,308.2 209.68,205.8 248.35,207.4 287.02,302.7 325.69,284.9 364.36,276.6 403.03,228" fill="none" stroke="#a6e0f2" stroke-width="3" stroke-linejoin="round"/><text x="90.8" y="392" font-size="14" fill="#8a8a8a" text-anchor="middle" font-weight="normal">5</text><text x="159.7" y="392" font-size="14" fill="#8a8a8a" text-anchor="middle" font-weight="normal">10</text><text x="228.7" y="392" font-size="14" fill="#8a8a8a" text-anchor="middle" font-weight="normal">15</text><text x="297.6" y="392" font-size="14" fill="#8a8a8a" text-anchor="middle" font-weight="normal">20</text><text x="366.6" y="392" font-size="14" fill="#8a8a8a" text-anchor="middle" font-weight="normal">25</text></g><rect x="17" y="422" width="386" height="12.5" fill="#c4f5b0"/><text x="25.2" y="462.8" font-size="18.5" fill="#444" text-anchor="start" font-weight="normal" class="lab">AUC</text><text x="394.4" y="464.2" font-size="18.5" fill="#444" text-anchor="end" font-weight="normal">0.5940</text><line x1="17" y1="473.8" x2="403" y2="473.8" stroke="#ececec" stroke-width="2"/><text x="25.2" y="497.5" font-size="18.5" fill="#444" text-anchor="start" font-weight="normal" class="lab">P Value</text><text x="394.4" y="498.8" font-size="18.5" fill="#e8953a" text-anchor="end" font-weight="normal">0.0288</text></svg></div><div class="card" style="left:899px;top:760px"><svg width="420" height="557" viewBox="0 0 420 557"><defs><clipPath id="c8"><rect x="0" y="70" width="410" height="345"/></clipPath><clipPath id="c8r"><rect x="0" y="70" width="403.5" height="345"/></clipPath></defs><text x="0" y="0" font-size="22.8" fill="#444" font-weight="bold" transform="translate(25.0 34.6) scale(0.96 1)">TotalWorkingYears</text><g stroke="#5cad4f" stroke-width="1.9" stroke-linecap="round" fill="none"><line x1="31.2" y1="46.8" x2="28.8" y2="60.9"/><line x1="36.7" y1="46.8" x2="34.3" y2="60.9"/><line x1="26.6" y1="50.8" x2="39.6" y2="50.8"/><line x1="25.6" y1="56.9" x2="38.6" y2="56.9"/></g><text x="52.1" y="60.6" font-size="21" fill="#777" text-anchor="start" font-weight="normal">Numeric</text><polyline points="379.2,33.5 386.9,41.1 394.5,33.5" fill="none" stroke="#444" stroke-width="1.7"/><line x1="9.4" y1="68.3" x2="410.7" y2="68.3" stroke="#ebebeb" stroke-width="2"/><g clip-path="url(#c8)"><line x1="55" y1="89.2" x2="403" y2="89.2" stroke="#ececec" stroke-width="2"/><line x1="55" y1="166.3" x2="403" y2="166.3" stroke="#ececec" stroke-width="2"/><text x="0" y="0" font-size="13.6" fill="#8a8a8a" text-anchor="end" transform="translate(52.5 171.3) scale(1 1.12)">20%</text><line x1="55" y1="243.2" x2="403" y2="243.2" stroke="#ececec" stroke-width="2"/><text x="0" y="0" font-size="13.6" fill="#8a8a8a" text-anchor="end" transform="translate(52.5 248.2) scale(1 1.12)">10%</text><line x1="55" y1="320.1" x2="403" y2="320.1" stroke="#ececec" stroke-width="2"/><text x="0" y="0" font-size="13.6" fill="#8a8a8a" text-anchor="end" transform="translate(52.5 325.1) scale(1 1.12)">0%</text><polygon points="55,86.9 93.67,139 132.34,179.7 171.01,200.3 209.68,179 248.35,215.3 287.02,141.4 325.69,218.1 364.36,158 403.03,136.3 403.03,375.4 364.36,341.8 325.69,351.7 287.02,293.6 248.35,316.9 209.68,282.5 171.01,288.4 132.34,252.9 93.67,229.2 55,245" fill="rgba(163,220,239,0.2)"/><polyline points="55,165.9 93.67,184.1 132.34,217.3 171.01,245 209.68,230.3 248.35,265.9 287.02,217.3 325.69,285.7 364.36,250.1 403.03,256" fill="none" stroke="#a6e0f2" stroke-width="3" stroke-linejoin="round"/><text x="78.2" y="392" font-size="14" fill="#8a8a8a" text-anchor="middle" font-weight="normal">5</text><text x="132.1" y="392" font-size="14" fill="#8a8a8a" text-anchor="middle" font-weight="normal">10</text><text x="186" y="392" font-size="14" fill="#8a8a8a" text-anchor="middle" font-weight="normal">15</text><text x="239.8" y="392" font-size="14" fill="#8a8a8a" text-anchor="middle" font-weight="normal">20</text><text x="293.6" y="392" font-size="14" fill="#8a8a8a" text-anchor="middle" font-weight="normal">25</text><text x="347.4" y="392" font-size="14" fill="#8a8a8a" text-anchor="middle" font-weight="normal">30</text></g><rect x="17" y="422" width="386" height="12.5" fill="#c4f5b0"/><text x="25.2" y="462.8" font-size="18.5" fill="#444" text-anchor="start" font-weight="normal" class="lab">AUC</text><text x="394.4" y="464.2" font-size="18.5" fill="#444" text-anchor="end" font-weight="normal">0.5851</text><line x1="17" y1="473.8" x2="403" y2="473.8" stroke="#ececec" stroke-width="2"/><text x="25.2" y="497.5" font-size="18.5" fill="#444" text-anchor="start" font-weight="normal" class="lab">P Value</text><text x="394.4" y="498.8" font-size="18.5" fill="#9a9a9a" text-anchor="end" font-weight="normal">0.3308</text></svg></div><div class="card" style="left:1335px;top:760px"><svg width="420" height="557" viewBox="0 0 420 557"><defs><clipPath id="c9"><rect x="0" y="70" width="410" height="345"/></clipPath><clipPath id="c9r"><rect x="0" y="70" width="403.5" height="345"/></clipPath></defs><text x="0" y="0" font-size="22.8" fill="#444" font-weight="bold" transform="translate(25.0 34.6) scale(0.96 1)">JobInvolvement</text><g stroke="#5cad4f" stroke-width="1.9" stroke-linecap="round" fill="none"><line x1="31.2" y1="46.8" x2="28.8" y2="60.9"/><line x1="36.7" y1="46.8" x2="34.3" y2="60.9"/><line x1="26.6" y1="50.8" x2="39.6" y2="50.8"/><line x1="25.6" y1="56.9" x2="38.6" y2="56.9"/></g><text x="52.1" y="60.6" font-size="21" fill="#777" text-anchor="start" font-weight="normal">Numeric</text><polyline points="379.2,33.5 386.9,41.1 394.5,33.5" fill="none" stroke="#444" stroke-width="1.7"/><line x1="9.4" y1="68.3" x2="410.7" y2="68.3" stroke="#ebebeb" stroke-width="2"/><g clip-path="url(#c9)"><line x1="55" y1="92" x2="403" y2="92" stroke="#ececec" stroke-width="2"/><line x1="55" y1="151.7" x2="403" y2="151.7" stroke="#ececec" stroke-width="2"/><text x="0" y="0" font-size="13.6" fill="#8a8a8a" text-anchor="end" transform="translate(52.5 156.7) scale(1 1.12)">40%</text><line x1="55" y1="211.2" x2="403" y2="211.2" stroke="#ececec" stroke-width="2"/><text x="0" y="0" font-size="13.6" fill="#8a8a8a" text-anchor="end" transform="translate(52.5 216.2) scale(1 1.12)">30%</text><line x1="55" y1="270.8" x2="403" y2="270.8" stroke="#ececec" stroke-width="2"/><text x="0" y="0" font-size="13.6" fill="#8a8a8a" text-anchor="end" transform="translate(52.5 275.8) scale(1 1.12)">20%</text><line x1="55" y1="330.3" x2="403" y2="330.3" stroke="#ececec" stroke-width="2"/><text x="0" y="0" font-size="13.6" fill="#8a8a8a" text-anchor="end" transform="translate(52.5 335.3) scale(1 1.12)">10%</text><polygon points="77.8,92.8 178.4,274.6 279.1,306.2 379.7,295.6 379.7,370.3 279.1,340.6 178.4,335.1 77.8,263.5" fill="rgba(163,220,239,0.2)"/><polyline points="77.8,177.8 178.4,305 279.1,322.8 379.7,332.7" fill="none" stroke="#a6e0f2" stroke-width="3" stroke-linejoin="round"/><text x="77.8" y="392" font-size="14" fill="#8a8a8a" text-anchor="middle" font-weight="normal">1</text><text x="128.1" y="392" font-size="14" fill="#8a8a8a" text-anchor="middle" font-weight="normal">1.5</text><text x="178.4" y="392" font-size="14" fill="#8a8a8a" text-anchor="middle" font-weight="normal">2</text><text x="228.7" y="392" font-size="14" fill="#8a8a8a" text-anchor="middle" font-weight="normal">2.5</text><text x="279" y="392" font-size="14" fill="#8a8a8a" text-anchor="middle" font-weight="normal">3</text><text x="329.3" y="392" font-size="14" fill="#8a8a8a" text-anchor="middle" font-weight="normal">3.5</text><text x="379.6" y="392" font-size="14" fill="#8a8a8a" text-anchor="middle" font-weight="normal">4</text></g><rect x="17" y="422" width="386" height="12.5" fill="#c4f5b0"/><text x="25.2" y="462.8" font-size="18.5" fill="#444" text-anchor="start" font-weight="normal" class="lab">AUC</text><text x="394.4" y="464.2" font-size="18.5" fill="#444" text-anchor="end" font-weight="normal">0.5842</text><line x1="17" y1="473.8" x2="403" y2="473.8" stroke="#ececec" stroke-width="2"/><text x="25.2" y="497.5" font-size="18.5" fill="#444" text-anchor="start" font-weight="normal" class="lab">P Value</text><text x="394.4" y="498.8" font-size="18.5" fill="#3d9e63" text-anchor="end" font-weight="normal">&lt; 0.0001</text></svg></div><div class="card" style="left:1771px;top:760px"><svg width="420" height="557" viewBox="0 0 420 557"><defs><clipPath id="c10"><rect x="0" y="70" width="410" height="345"/></clipPath><clipPath id="c10r"><rect x="0" y="70" width="403.5" height="345"/></clipPath></defs><text x="0" y="0" font-size="22.8" fill="#444" font-weight="bold" transform="translate(25.0 34.6) scale(0.96 1)">NumCompaniesWorked</text><g stroke="#5cad4f" stroke-width="1.9" stroke-linecap="round" fill="none"><line x1="31.2" y1="46.8" x2="28.8" y2="60.9"/><line x1="36.7" y1="46.8" x2="34.3" y2="60.9"/><line x1="26.6" y1="50.8" x2="39.6" y2="50.8"/><line x1="25.6" y1="56.9" x2="38.6" y2="56.9"/></g><text x="52.1" y="60.6" font-size="21" fill="#777" text-anchor="start" font-weight="normal">Numeric</text><polyline points="379.2,33.5 386.9,41.1 394.5,33.5" fill="none" stroke="#444" stroke-width="1.7"/><line x1="9.4" y1="68.3" x2="410.7" y2="68.3" stroke="#ebebeb" stroke-width="2"/><g clip-path="url(#c10)"><line x1="55" y1="93.6" x2="403" y2="93.6" stroke="#ececec" stroke-width="2"/><line x1="55" y1="163.1" x2="403" y2="163.1" stroke="#ececec" stroke-width="2"/><text x="0" y="0" font-size="13.6" fill="#8a8a8a" text-anchor="end" transform="translate(52.5 168.1) scale(1 1.12)">30%</text><line x1="55" y1="232.6" x2="403" y2="232.6" stroke="#ececec" stroke-width="2"/><text x="0" y="0" font-size="13.6" fill="#8a8a8a" text-anchor="end" transform="translate(52.5 237.6) scale(1 1.12)">20%</text><line x1="55" y1="302.1" x2="403" y2="302.1" stroke="#ececec" stroke-width="2"/><text x="0" y="0" font-size="13.6" fill="#8a8a8a" text-anchor="end" transform="translate(52.5 307.1) scale(1 1.12)">10%</text><line x1="55" y1="371.3" x2="403" y2="371.3" stroke="#ececec" stroke-width="2"/><text x="0" y="0" font-size="13.6" fill="#8a8a8a" text-anchor="end" transform="translate(52.5 376.3) scale(1 1.12)">0%</text><polygon points="55,280.5 93.67,245.8 132.34,262 171.01,282.5 209.68,245 248.35,161.2 287.02,126.4 325.69,85.7 364.36,217.3 403.03,88.8 403.03,308.2 364.36,374.6 325.69,264.7 287.02,310.2 248.35,337.8 209.68,337.8 171.01,355.6 132.34,341.8 93.67,309.4 55,354.8" fill="rgba(163,220,239,0.2)"/><polyline points="55,318.5 93.67,277.4 132.34,302.3 171.01,319.3 209.68,291.6 248.35,248.9 287.02,217.3 325.69,174.6 364.36,296.3 403.03,198.3" fill="none" stroke="#a6e0f2" stroke-width="3" stroke-linejoin="round"/><text x="55.2" y="392" font-size="14" fill="#8a8a8a" text-anchor="middle" font-weight="normal">0</text><text x="132.5" y="392" font-size="14" fill="#8a8a8a" text-anchor="middle" font-weight="normal">2</text><text x="209.8" y="392" font-size="14" fill="#8a8a8a" text-anchor="middle" font-weight="normal">4</text><text x="287.2" y="392" font-size="14" fill="#8a8a8a" text-anchor="middle" font-weight="normal">6</text><text x="364.5" y="392" font-size="14" fill="#8a8a8a" text-anchor="middle" font-weight="normal">8</text></g><rect x="17" y="422" width="386" height="12.5" fill="#c4f5b0"/><text x="25.2" y="462.8" font-size="18.5" fill="#444" text-anchor="start" font-weight="normal" class="lab">AUC</text><text x="394.4" y="464.2" font-size="18.5" fill="#444" text-anchor="end" font-weight="normal">0.5814</text><line x1="17" y1="473.8" x2="403" y2="473.8" stroke="#ececec" stroke-width="2"/><text x="25.2" y="497.5" font-size="18.5" fill="#444" text-anchor="start" font-weight="normal" class="lab">P Value</text><text x="394.4" y="498.8" font-size="18.5" fill="#3d9e63" text-anchor="end" font-weight="normal">0.0086</text></svg></div><div class="card" style="left:2207px;top:760px"><svg width="420" height="557" viewBox="0 0 420 557"><defs><clipPath id="c11"><rect x="0" y="70" width="410" height="345"/></clipPath><clipPath id="c11r"><rect x="0" y="70" width="403.5" height="345"/></clipPath></defs><text x="0" y="0" font-size="22.8" fill="#444" font-weight="bold" transform="translate(25.0 34.6) scale(0.96 1)">TrainingTimesLastYear</text><g stroke="#5cad4f" stroke-width="1.9" stroke-linecap="round" fill="none"><line x1="31.2" y1="46.8" x2="28.8" y2="60.9"/><line x1="36.7" y1="46.8" x2="34.3" y2="60.9"/><line x1="26.6" y1="50.8" x2="39.6" y2="50.8"/><line x1="25.6" y1="56.9" x2="38.6" y2="56.9"/></g><text x="52.1" y="60.6" font-size="21" fill="#777" text-anchor="start" font-weight="normal">Numeric</text><polyline points="379.2,33.5 386.9,41.1 394.5,33.5" fill="none" stroke="#444" stroke-width="1.7"/><line x1="9.4" y1="68.3" x2="410.7" y2="68.3" stroke="#ebebeb" stroke-width="2"/><g clip-path="url(#c11)"><line x1="55" y1="115.7" x2="403" y2="115.7" stroke="#ececec" stroke-width="2"/><text x="0" y="0" font-size="13.6" fill="#8a8a8a" text-anchor="end" transform="translate(52.5 120.7) scale(1 1.12)">40%</text><line x1="55" y1="176.3" x2="403" y2="176.3" stroke="#ececec" stroke-width="2"/><text x="0" y="0" font-size="13.6" fill="#8a8a8a" text-anchor="end" transform="translate(52.5 181.3) scale(1 1.12)">30%</text><line x1="55" y1="237.1" x2="403" y2="237.1" stroke="#ececec" stroke-width="2"/><text x="0" y="0" font-size="13.6" fill="#8a8a8a" text-anchor="end" transform="translate(52.5 242.1) scale(1 1.12)">20%</text><line x1="55" y1="297.7" x2="403" y2="297.7" stroke="#ececec" stroke-width="2"/><text x="0" y="0" font-size="13.6" fill="#8a8a8a" text-anchor="end" transform="translate(52.5 302.7) scale(1 1.12)">10%</text><line x1="55" y1="358.4" x2="403" y2="358.4" stroke="#ececec" stroke-width="2"/><text x="0" y="0" font-size="13.6" fill="#8a8a8a" text-anchor="end" transform="translate(52.5 363.4) scale(1 1.12)">0%</text><polygon points="78.2,92.8 128.45,229.2 178.7,228 228.95,279.4 279.2,210.2 329.45,269.5 379.7,271.8 379.7,370.3 329.45,349.7 279.2,316.9 228.95,322.8 178.7,280.5 128.45,344.6 78.2,308.2" fill="rgba(163,220,239,0.2)"/><polyline points="78.2,200.3 128.45,287.6 178.7,252.9 228.95,301.5 279.2,262.8 329.45,309.4 379.7,320.8" fill="none" stroke="#a6e0f2" stroke-width="3" stroke-linejoin="round"/><text x="78.2" y="392" font-size="14" fill="#8a8a8a" text-anchor="middle" font-weight="normal">0</text><text x="128.45" y="392" font-size="14" fill="#8a8a8a" text-anchor="middle" font-weight="normal">1</text><text x="178.7" y="392" font-size="14" fill="#8a8a8a" text-anchor="middle" font-weight="normal">2</text><text x="228.95" y="392" font-size="14" fill="#8a8a8a" text-anchor="middle" font-weight="normal">3</text><text x="279.2" y="392" font-size="14" fill="#8a8a8a" text-anchor="middle" font-weight="normal">4</text><text x="329.45" y="392" font-size="14" fill="#8a8a8a" text-anchor="middle" font-weight="normal">5</text><text x="379.7" y="392" font-size="14" fill="#8a8a8a" text-anchor="middle" font-weight="normal">6</text></g><rect x="17" y="422" width="386" height="12.5" fill="#c4f5b0"/><text x="25.2" y="462.8" font-size="18.5" fill="#444" text-anchor="start" font-weight="normal" class="lab">AUC</text><text x="394.4" y="464.2" font-size="18.5" fill="#444" text-anchor="end" font-weight="normal">0.5796</text><line x1="17" y1="473.8" x2="403" y2="473.8" stroke="#ececec" stroke-width="2"/><text x="25.2" y="497.5" font-size="18.5" fill="#444" text-anchor="start" font-weight="normal" class="lab">P Value</text><text x="394.4" y="498.8" font-size="18.5" fill="#e8953a" text-anchor="end" font-weight="normal">0.0303</text></svg></div><div class="card" style="left:27px;top:1333px"><svg width="420" height="557" viewBox="0 0 420 557"><defs><clipPath id="c12"><rect x="0" y="70" width="410" height="345"/></clipPath><clipPath id="c12r"><rect x="0" y="70" width="403.5" height="345"/></clipPath></defs><text x="0" y="0" font-size="22.8" fill="#444" font-weight="bold" transform="translate(25.0 34.6) scale(0.96 1)">JobSatisfaction</text><g stroke="#5cad4f" stroke-width="1.9" stroke-linecap="round" fill="none"><line x1="31.2" y1="46.8" x2="28.8" y2="60.9"/><line x1="36.7" y1="46.8" x2="34.3" y2="60.9"/><line x1="26.6" y1="50.8" x2="39.6" y2="50.8"/><line x1="25.6" y1="56.9" x2="38.6" y2="56.9"/></g><text x="52.1" y="60.6" font-size="21" fill="#777" text-anchor="start" font-weight="normal">Numeric</text><polyline points="379.2,33.5 386.9,41.1 394.5,33.5" fill="none" stroke="#444" stroke-width="1.7"/><line x1="9.4" y1="68.3" x2="410.7" y2="68.3" stroke="#ebebeb" stroke-width="2"/><g clip-path="url(#c12)"><line x1="55" y1="109.5" x2="403" y2="109.5" stroke="#ececec" stroke-width="2"/><text x="0" y="0" font-size="13.6" fill="#8a8a8a" text-anchor="end" transform="translate(52.5 114.5) scale(1 1.12)">25%</text><line x1="55" y1="177.6" x2="403" y2="177.6" stroke="#ececec" stroke-width="2"/><text x="0" y="0" font-size="13.6" fill="#8a8a8a" text-anchor="end" transform="translate(52.5 182.6) scale(1 1.12)">20%</text><line x1="55" y1="245.7" x2="403" y2="245.7" stroke="#ececec" stroke-width="2"/><text x="0" y="0" font-size="13.6" fill="#8a8a8a" text-anchor="end" transform="translate(52.5 250.7) scale(1 1.12)">15%</text><line x1="55" y1="313.8" x2="403" y2="313.8" stroke="#ececec" stroke-width="2"/><text x="0" y="0" font-size="13.6" fill="#8a8a8a" text-anchor="end" transform="translate(52.5 318.8) scale(1 1.12)">10%</text><polygon points="77.8,90.6 178.4,205 279.1,240 379.7,250 379.7,360 279.1,350 178.4,340 77.8,300" fill="rgba(163,220,239,0.2)"/><polyline points="77.8,179.6 178.4,268 279.1,290 379.7,300" fill="none" stroke="#a6e0f2" stroke-width="3" stroke-linejoin="round"/></g><rect x="17" y="422" width="386" height="12.5" fill="#c4f5b0"/><text x="25.2" y="462.8" font-size="18.5" fill="#444" text-anchor="start" font-weight="normal" class="lab">AUC</text><text x="394.4" y="464.2" font-size="18.5" fill="#444" text-anchor="end" font-weight="normal">0.5700</text><line x1="17" y1="473.8" x2="403" y2="473.8" stroke="#ececec" stroke-width="2"/><text x="25.2" y="497.5" font-size="18.5" fill="#444" text-anchor="start" font-weight="normal" class="lab">P Value</text><text x="394.4" y="498.8" font-size="18.5" fill="#3d9e63" text-anchor="end" font-weight="normal">0.0100</text></svg></div><div class="card" style="left:463px;top:1333px"><svg width="420" height="557" viewBox="0 0 420 557"><defs><clipPath id="c13"><rect x="0" y="70" width="410" height="345"/></clipPath><clipPath id="c13r"><rect x="0" y="70" width="403.5" height="345"/></clipPath></defs><text x="0" y="0" font-size="22.8" fill="#444" font-weight="bold" transform="translate(25.0 34.6) scale(0.96 1)">JobLevel</text><g stroke="#5cad4f" stroke-width="1.9" stroke-linecap="round" fill="none"><line x1="31.2" y1="46.8" x2="28.8" y2="60.9"/><line x1="36.7" y1="46.8" x2="34.3" y2="60.9"/><line x1="26.6" y1="50.8" x2="39.6" y2="50.8"/><line x1="25.6" y1="56.9" x2="38.6" y2="56.9"/></g><text x="52.1" y="60.6" font-size="21" fill="#777" text-anchor="start" font-weight="normal">Numeric</text><polyline points="379.2,33.5 386.9,41.1 394.5,33.5" fill="none" stroke="#444" stroke-width="1.7"/><line x1="9.4" y1="68.3" x2="410.7" y2="68.3" stroke="#ebebeb" stroke-width="2"/><g clip-path="url(#c13)"><line x1="55" y1="135.1" x2="403" y2="135.1" stroke="#ececec" stroke-width="2"/><text x="0" y="0" font-size="13.6" fill="#8a8a8a" text-anchor="end" transform="translate(52.5 140.1) scale(1 1.12)">20%</text><line x1="55" y1="192.7" x2="403" y2="192.7" stroke="#ececec" stroke-width="2"/><text x="0" y="0" font-size="13.6" fill="#8a8a8a" text-anchor="end" transform="translate(52.5 197.7) scale(1 1.12)">15%</text><line x1="55" y1="250.3" x2="403" y2="250.3" stroke="#ececec" stroke-width="2"/><text x="0" y="0" font-size="13.6" fill="#8a8a8a" text-anchor="end" transform="translate(52.5 255.3) scale(1 1.12)">10%</text><line x1="55" y1="307.9" x2="403" y2="307.9" stroke="#ececec" stroke-width="2"/><text x="0" y="0" font-size="13.6" fill="#8a8a8a" text-anchor="end" transform="translate(52.5 312.9) scale(1 1.12)">5%</text><polygon points="77.7,90.6 153.2,200.5 228.7,122.9 304.2,215.5 379.7,240 379.7,330 304.2,320 228.7,250 153.2,300 77.7,230" fill="rgba(163,220,239,0.2)"/><polyline points="77.7,151.2 153.2,239 228.7,188.4 304.2,268 379.7,280" fill="none" stroke="#a6e0f2" stroke-width="3" stroke-linejoin="round"/></g><rect x="17" y="422" width="386" height="12.5" fill="#c4f5b0"/><text x="25.2" y="462.8" font-size="18.5" fill="#444" text-anchor="start" font-weight="normal" class="lab">AUC</text><text x="394.4" y="464.2" font-size="18.5" fill="#444" text-anchor="end" font-weight="normal">0.5690</text><line x1="17" y1="473.8" x2="403" y2="473.8" stroke="#ececec" stroke-width="2"/><text x="25.2" y="497.5" font-size="18.5" fill="#444" text-anchor="start" font-weight="normal" class="lab">P Value</text><text x="394.4" y="498.8" font-size="18.5" fill="#3d9e63" text-anchor="end" font-weight="normal">0.0100</text></svg></div><div class="card" style="left:899px;top:1333px"><svg width="420" height="557" viewBox="0 0 420 557"><defs><clipPath id="c14"><rect x="0" y="70" width="410" height="345"/></clipPath><clipPath id="c14r"><rect x="0" y="70" width="403.5" height="345"/></clipPath></defs><text x="0" y="0" font-size="22.8" fill="#444" font-weight="bold" transform="translate(25.0 34.6) scale(0.96 1)">MonthlyIncome</text><g stroke="#5cad4f" stroke-width="1.9" stroke-linecap="round" fill="none"><line x1="31.2" y1="46.8" x2="28.8" y2="60.9"/><line x1="36.7" y1="46.8" x2="34.3" y2="60.9"/><line x1="26.6" y1="50.8" x2="39.6" y2="50.8"/><line x1="25.6" y1="56.9" x2="38.6" y2="56.9"/></g><text x="52.1" y="60.6" font-size="21" fill="#777" text-anchor="start" font-weight="normal">Numeric</text><polyline points="379.2,33.5 386.9,41.1 394.5,33.5" fill="none" stroke="#444" stroke-width="1.7"/><line x1="9.4" y1="68.3" x2="410.7" y2="68.3" stroke="#ebebeb" stroke-width="2"/><g clip-path="url(#c14)"><line x1="55" y1="158.7" x2="403" y2="158.7" stroke="#ececec" stroke-width="2"/><text x="0" y="0" font-size="13.6" fill="#8a8a8a" text-anchor="end" transform="translate(52.5 163.7) scale(1 1.12)">20%</text><line x1="55" y1="232" x2="403" y2="232" stroke="#ececec" stroke-width="2"/><text x="0" y="0" font-size="13.6" fill="#8a8a8a" text-anchor="end" transform="translate(52.5 237) scale(1 1.12)">10%</text><line x1="55" y1="305" x2="403" y2="305" stroke="#ececec" stroke-width="2"/><text x="0" y="0" font-size="13.6" fill="#8a8a8a" text-anchor="end" transform="translate(52.5 310) scale(1 1.12)">0%</text><polygon points="55,122 93.67,159.5 132.34,194.5 171.01,90.9 209.68,84.5 248.35,202 287.02,92.3 325.69,360 364.36,250 403.03,260 403.03,300 364.36,320 325.69,320 287.02,290 248.35,300 209.68,260 171.01,280 132.34,290 93.67,270 55,240" fill="rgba(163,220,239,0.2)"/><polyline points="55,183.1 93.67,214 132.34,240 171.01,196 209.68,175.3 248.35,275 287.02,260 325.69,280 364.36,280 403.03,270" fill="none" stroke="#a6e0f2" stroke-width="3" stroke-linejoin="round"/></g><rect x="17" y="422" width="386" height="12.5" fill="#c4f5b0"/><text x="25.2" y="462.8" font-size="18.5" fill="#444" text-anchor="start" font-weight="normal" class="lab">AUC</text><text x="394.4" y="464.2" font-size="18.5" fill="#444" text-anchor="end" font-weight="normal">0.5680</text><line x1="17" y1="473.8" x2="403" y2="473.8" stroke="#ececec" stroke-width="2"/><text x="25.2" y="497.5" font-size="18.5" fill="#444" text-anchor="start" font-weight="normal" class="lab">P Value</text><text x="394.4" y="498.8" font-size="18.5" fill="#3d9e63" text-anchor="end" font-weight="normal">0.0100</text></svg></div><div class="card" style="left:1335px;top:1333px"><svg width="420" height="557" viewBox="0 0 420 557"><defs><clipPath id="c15"><rect x="0" y="70" width="410" height="345"/></clipPath><clipPath id="c15r"><rect x="0" y="70" width="403.5" height="345"/></clipPath></defs><text x="0" y="0" font-size="22.8" fill="#444" font-weight="bold" transform="translate(25.0 34.6) scale(0.96 1)">EducationField</text><path d="M30.49 46.52 L34.26 46.52 L38.63 59.42 L40.02 60.02 L40.02 61.4 L34.46 61.4 L34.46 60.02 L35.45 59.42 L34.66 57.04 L29.7 57.04 L28.9 59.42 L30.1 60.02 L30.1 61.4 L24.94 61.4 L24.94 60.02 L26.33 59.42 Z M32.48 50.1 L34.06 54.46 L30.89 54.46 Z" fill="#3b82d0" fill-rule="evenodd"/><text x="49.3" y="60.6" font-size="21" fill="#777" text-anchor="start" font-weight="normal">Character</text><polyline points="379.2,33.5 386.9,41.1 394.5,33.5" fill="none" stroke="#444" stroke-width="1.7"/><line x1="9.4" y1="68.3" x2="410.7" y2="68.3" stroke="#ebebeb" stroke-width="2"/><g clip-path="url(#c15)"><line x1="55" y1="153.3" x2="403" y2="153.3" stroke="#ececec" stroke-width="2"/><text x="0" y="0" font-size="13.6" fill="#8a8a8a" text-anchor="end" transform="translate(52.5 158.3) scale(1 1.12)">20%</text><line x1="55" y1="226" x2="403" y2="226" stroke="#ececec" stroke-width="2"/><text x="0" y="0" font-size="13.6" fill="#8a8a8a" text-anchor="end" transform="translate(52.5 231) scale(1 1.12)">10%</text><line x1="55" y1="299" x2="403" y2="299" stroke="#ececec" stroke-width="2"/><text x="0" y="0" font-size="13.6" fill="#8a8a8a" text-anchor="end" transform="translate(52.5 304) scale(1 1.12)">0%</text><line x1="84" y1="105.1" x2="84" y2="260" stroke="#a6e0f2" stroke-width="3"/><line x1="77.5" y1="105.1" x2="90.5" y2="105.1" stroke="#a6e0f2" stroke-width="3"/><line x1="77.5" y1="260" x2="90.5" y2="260" stroke="#a6e0f2" stroke-width="3"/><circle cx="84" cy="166.7" r="4.6" fill="#a6e0f2"/><line x1="142.05" y1="164.8" x2="142.05" y2="260" stroke="#a6e0f2" stroke-width="3"/><line x1="135.55" y1="164.8" x2="148.55" y2="164.8" stroke="#a6e0f2" stroke-width="3"/><line x1="135.55" y1="260" x2="148.55" y2="260" stroke="#a6e0f2" stroke-width="3"/><circle cx="142.05" cy="194.5" r="4.6" fill="#a6e0f2"/><line x1="200.1" y1="97.7" x2="200.1" y2="300" stroke="#a6e0f2" stroke-width="3"/><line x1="193.6" y1="97.7" x2="206.6" y2="97.7" stroke="#a6e0f2" stroke-width="3"/><line x1="193.6" y1="300" x2="206.6" y2="300" stroke="#a6e0f2" stroke-width="3"/><circle cx="200.1" cy="230" r="4.6" fill="#a6e0f2"/><line x1="258.15" y1="191.3" x2="258.15" y2="290" stroke="#a6e0f2" stroke-width="3"/><line x1="251.65" y1="191.3" x2="264.65" y2="191.3" stroke="#a6e0f2" stroke-width="3"/><line x1="251.65" y1="290" x2="264.65" y2="290" stroke="#a6e0f2" stroke-width="3"/><circle cx="258.15" cy="230" r="4.6" fill="#a6e0f2"/><line x1="316.2" y1="176.7" x2="316.2" y2="300" stroke="#a6e0f2" stroke-width="3"/><line x1="309.7" y1="176.7" x2="322.7" y2="176.7" stroke="#a6e0f2" stroke-width="3"/><line x1="309.7" y1="300" x2="322.7" y2="300" stroke="#a6e0f2" stroke-width="3"/><circle cx="316.2" cy="240" r="4.6" fill="#a6e0f2"/><line x1="374.25" y1="230" x2="374.25" y2="300" stroke="#a6e0f2" stroke-width="3"/><line x1="367.75" y1="230" x2="380.75" y2="230" stroke="#a6e0f2" stroke-width="3"/><line x1="367.75" y1="300" x2="380.75" y2="300" stroke="#a6e0f2" stroke-width="3"/><circle cx="374.25" cy="260" r="4.6" fill="#a6e0f2"/></g><rect x="17" y="422" width="386" height="12.5" fill="#c4f5b0"/><text x="25.2" y="462.8" font-size="18.5" fill="#444" text-anchor="start" font-weight="normal" class="lab">AUC</text><text x="394.4" y="464.2" font-size="18.5" fill="#444" text-anchor="end" font-weight="normal">0.5600</text><line x1="17" y1="473.8" x2="403" y2="473.8" stroke="#ececec" stroke-width="2"/><text x="25.2" y="497.5" font-size="18.5" fill="#444" text-anchor="start" font-weight="normal" class="lab">P Value</text><text x="394.4" y="498.8" font-size="18.5" fill="#3d9e63" text-anchor="end" font-weight="normal">0.0100</text><line x1="17" y1="508.4" x2="403" y2="508.4" stroke="#ececec" stroke-width="2"/><text x="25.2" y="533.6" font-size="18.5" fill="#444" text-anchor="start" font-weight="normal" class="lab">Unique Values</text><text x="394.4" y="534.6" font-size="18.5" fill="#444" text-anchor="end" font-weight="normal">6</text></svg></div><div class="card" style="left:1771px;top:1333px"><svg width="420" height="557" viewBox="0 0 420 557"><defs><clipPath id="c16"><rect x="0" y="70" width="410" height="345"/></clipPath><clipPath id="c16r"><rect x="0" y="70" width="403.5" height="345"/></clipPath></defs><text x="0" y="0" font-size="22.8" fill="#444" font-weight="bold" transform="translate(25.0 34.6) scale(0.96 1)">Department</text><path d="M30.49 46.52 L34.26 46.52 L38.63 59.42 L40.02 60.02 L40.02 61.4 L34.46 61.4 L34.46 60.02 L35.45 59.42 L34.66 57.04 L29.7 57.04 L28.9 59.42 L30.1 60.02 L30.1 61.4 L24.94 61.4 L24.94 60.02 L26.33 59.42 Z M32.48 50.1 L34.06 54.46 L30.89 54.46 Z" fill="#3b82d0" fill-rule="evenodd"/><text x="49.3" y="60.6" font-size="21" fill="#777" text-anchor="start" font-weight="normal">Character</text><polyline points="379.2,33.5 386.9,41.1 394.5,33.5" fill="none" stroke="#444" stroke-width="1.7"/><line x1="9.4" y1="68.3" x2="410.7" y2="68.3" stroke="#ebebeb" stroke-width="2"/><g clip-path="url(#c16)"><line x1="55" y1="130.6" x2="403" y2="130.6" stroke="#ececec" stroke-width="2"/><text x="0" y="0" font-size="13.6" fill="#8a8a8a" text-anchor="end" transform="translate(52.5 135.6) scale(1 1.12)">20%</text><line x1="55" y1="184.7" x2="403" y2="184.7" stroke="#ececec" stroke-width="2"/><text x="0" y="0" font-size="13.6" fill="#8a8a8a" text-anchor="end" transform="translate(52.5 189.7) scale(1 1.12)">15%</text><line x1="55" y1="238.8" x2="403" y2="238.8" stroke="#ececec" stroke-width="2"/><text x="0" y="0" font-size="13.6" fill="#8a8a8a" text-anchor="end" transform="translate(52.5 243.8) scale(1 1.12)">10%</text><line x1="113.1" y1="97.7" x2="113.1" y2="210" stroke="#a6e0f2" stroke-width="3"/><line x1="106.6" y1="97.7" x2="119.6" y2="97.7" stroke="#a6e0f2" stroke-width="3"/><line x1="106.6" y1="210" x2="119.6" y2="210" stroke="#a6e0f2" stroke-width="3"/><circle cx="113.1" cy="150.8" r="4.6" fill="#a6e0f2"/><line x1="229.3" y1="115.7" x2="229.3" y2="300" stroke="#a6e0f2" stroke-width="3"/><line x1="222.8" y1="115.7" x2="235.8" y2="115.7" stroke="#a6e0f2" stroke-width="3"/><line x1="222.8" y1="300" x2="235.8" y2="300" stroke="#a6e0f2" stroke-width="3"/><circle cx="229.3" cy="220" r="4.6" fill="#a6e0f2"/><line x1="345.5" y1="210" x2="345.5" y2="300" stroke="#a6e0f2" stroke-width="3"/><line x1="339" y1="210" x2="352" y2="210" stroke="#a6e0f2" stroke-width="3"/><line x1="339" y1="300" x2="352" y2="300" stroke="#a6e0f2" stroke-width="3"/><circle cx="345.5" cy="250" r="4.6" fill="#a6e0f2"/></g><rect x="17" y="422" width="386" height="12.5" fill="#c4f5b0"/><text x="25.2" y="462.8" font-size="18.5" fill="#444" text-anchor="start" font-weight="normal" class="lab">AUC</text><text x="394.4" y="464.2" font-size="18.5" fill="#444" text-anchor="end" font-weight="normal">0.5550</text><line x1="17" y1="473.8" x2="403" y2="473.8" stroke="#ececec" stroke-width="2"/><text x="25.2" y="497.5" font-size="18.5" fill="#444" text-anchor="start" font-weight="normal" class="lab">P Value</text><text x="394.4" y="498.8" font-size="18.5" fill="#3d9e63" text-anchor="end" font-weight="normal">0.0100</text><line x1="17" y1="508.4" x2="403" y2="508.4" stroke="#ececec" stroke-width="2"/><text x="25.2" y="533.6" font-size="18.5" fill="#444" text-anchor="start" font-weight="normal" class="lab">Unique Values</text><text x="394.4" y="534.6" font-size="18.5" fill="#444" text-anchor="end" font-weight="normal">3</text></svg></div><div class="card" style="left:2207px;top:1333px"><svg width="420" height="557" viewBox="0 0 420 557"><defs><clipPath id="c17"><rect x="0" y="70" width="410" height="345"/></clipPath><clipPath id="c17r"><rect x="0" y="70" width="403.5" height="345"/></clipPath></defs><text x="0" y="0" font-size="22.8" fill="#444" font-weight="bold" transform="translate(25.0 34.6) scale(0.96 1)">BusinessTravel</text><path d="M30.49 46.52 L34.26 46.52 L38.63 59.42 L40.02 60.02 L40.02 61.4 L34.46 61.4 L34.46 60.02 L35.45 59.42 L34.66 57.04 L29.7 57.04 L28.9 59.42 L30.1 60.02 L30.1 61.4 L24.94 61.4 L24.94 60.02 L26.33 59.42 Z M32.48 50.1 L34.06 54.46 L30.89 54.46 Z" fill="#3b82d0" fill-rule="evenodd"/><text x="49.3" y="60.6" font-size="21" fill="#777" text-anchor="start" font-weight="normal">Character</text><polyline points="379.2,33.5 386.9,41.1 394.5,33.5" fill="none" stroke="#444" stroke-width="1.7"/><line x1="9.4" y1="68.3" x2="410.7" y2="68.3" stroke="#ebebeb" stroke-width="2"/><g clip-path="url(#c17)"><line x1="55" y1="154.8" x2="403" y2="154.8" stroke="#ececec" stroke-width="2"/><text x="0" y="0" font-size="13.6" fill="#8a8a8a" text-anchor="end" transform="translate(52.5 159.8) scale(1 1.12)">20%</text><line x1="55" y1="220" x2="403" y2="220" stroke="#ececec" stroke-width="2"/><text x="0" y="0" font-size="13.6" fill="#8a8a8a" text-anchor="end" transform="translate(52.5 225) scale(1 1.12)">15%</text><line x1="55" y1="285" x2="403" y2="285" stroke="#ececec" stroke-width="2"/><text x="0" y="0" font-size="13.6" fill="#8a8a8a" text-anchor="end" transform="translate(52.5 290) scale(1 1.12)">10%</text><line x1="113.1" y1="97.7" x2="113.1" y2="230" stroke="#a6e0f2" stroke-width="3"/><line x1="106.6" y1="97.7" x2="119.6" y2="97.7" stroke="#a6e0f2" stroke-width="3"/><line x1="106.6" y1="230" x2="119.6" y2="230" stroke="#a6e0f2" stroke-width="3"/><circle cx="113.1" cy="161.8" r="4.6" fill="#a6e0f2"/><line x1="229.3" y1="210" x2="229.3" y2="300" stroke="#a6e0f2" stroke-width="3"/><line x1="222.8" y1="210" x2="235.8" y2="210" stroke="#a6e0f2" stroke-width="3"/><line x1="222.8" y1="300" x2="235.8" y2="300" stroke="#a6e0f2" stroke-width="3"/><circle cx="229.3" cy="250" r="4.6" fill="#a6e0f2"/><line x1="345.5" y1="230" x2="345.5" y2="310" stroke="#a6e0f2" stroke-width="3"/><line x1="339" y1="230" x2="352" y2="230" stroke="#a6e0f2" stroke-width="3"/><line x1="339" y1="310" x2="352" y2="310" stroke="#a6e0f2" stroke-width="3"/><circle cx="345.5" cy="270" r="4.6" fill="#a6e0f2"/></g><rect x="17" y="422" width="386" height="12.5" fill="#c4f5b0"/><text x="25.2" y="462.8" font-size="18.5" fill="#444" text-anchor="start" font-weight="normal" class="lab">AUC</text><text x="394.4" y="464.2" font-size="18.5" fill="#444" text-anchor="end" font-weight="normal">0.5500</text><line x1="17" y1="473.8" x2="403" y2="473.8" stroke="#ececec" stroke-width="2"/><text x="25.2" y="497.5" font-size="18.5" fill="#444" text-anchor="start" font-weight="normal" class="lab">P Value</text><text x="394.4" y="498.8" font-size="18.5" fill="#3d9e63" text-anchor="end" font-weight="normal">0.0100</text><line x1="17" y1="508.4" x2="403" y2="508.4" stroke="#ececec" stroke-width="2"/><text x="25.2" y="533.6" font-size="18.5" fill="#444" text-anchor="start" font-weight="normal" class="lab">Unique Values</text><text x="394.4" y="534.6" font-size="18.5" fill="#444" text-anchor="end" font-weight="normal">3</text></svg></div></div>
<svg class="ov" width="2648" height="180" viewBox="0 0 2648 180"><g stroke="#777" stroke-width="1.9" fill="none" stroke-linecap="round" stroke-linejoin="round"><path d="M25.2 36.6 H48.4 M38.2 27.4 L48.4 36.6 L38.2 45.8"/><path d="M51.6 25 V48"/></g><rect x="72.2" y="15.7" width="160.7" height="43.3" rx="4" fill="#52a770"/><g stroke="#fff" stroke-width="1.9" fill="none"><rect x="87.2" y="25.5" width="27.3" height="23.8" rx="2.5"/><path d="M100.85 25.5 V49.3 M87.2 37.4 H114.5"/></g><text x="125.3" y="45.3" font-size="21.8" fill="#fff" text-anchor="start" font-weight="normal">Summary</text><g stroke="#52a770" stroke-width="1.9" fill="none"><rect x="253.1" y="25.7" width="27.3" height="23.3" rx="2.5"/><path d="M262.2 27 V49 M271.3 27 V49 M253.1 34.6 H280.4 M253.1 42 H280.4"/></g><rect x="253.1" y="24.8" width="27.3" height="3.2" rx="1.5" fill="#52a770"/><text x="290.3" y="45.1" font-size="21.8" fill="#52a770" text-anchor="start" font-weight="normal">Table</text><g stroke="#52a770" stroke-width="1.9" fill="none"><path d="M377.8 26.4 V47.6 H406.2"/><path d="M385.2 37.9 V42.3 M390.9 30.5 V42.3 M396 34.6 V42.3 M401.7 28.5 V42.3"/></g><text x="416.2" y="45.1" font-size="21.8" fill="#52a770" text-anchor="start" font-weight="normal">Chart</text><g stroke="#52a770" stroke-width="1.8" fill="none" stroke-linecap="round" stroke-linejoin="round"><path d="M511.2 43.2 C509.8 39.6 504.5 36.6 504.5 32.9 A9.9 9.9 0 0 1 524.3 32.9 C524.3 36.6 519 39.6 517.6 43.2 Z"/><path d="M510.6 43.2 V48.8 Q510.6 51.5 514.4 51.5 Q518.2 51.5 518.2 48.8 V43.2 M510.6 47.3 H518.2"/><path d="M508.9 33.1 A5.9 5.9 0 0 1 514.5 27.4"/></g><text x="534.2" y="45.1" font-size="21.8" fill="#52a770" text-anchor="start" font-weight="normal">Analytics</text><line x1="672.4" y1="26.7" x2="672.4" y2="50" stroke="#dcdcdc" stroke-width="1.5"/><text x="731.9" y="46.4" font-size="22" fill="#444" text-anchor="start" font-weight="bold">752</text><text x="775.4" y="46.4" font-size="22" fill="#444" text-anchor="start" font-weight="normal">Rows</text><text x="861" y="46.4" font-size="22" fill="#444" text-anchor="start" font-weight="bold">27</text><text x="891.9" y="46.4" font-size="22" fill="#444" text-anchor="start" font-weight="normal">Columns</text><path d="M2563.2 40.6 C2560.2 37.5 2560.4 32 2565.2 30 C2569.5 28.2 2575.6 28.6 2578 32.4 C2580.5 36.4 2577.3 41.6 2571.5 42.5 C2569.4 42.9 2567.5 42.6 2566.2 42.2 C2564.8 43.4 2562.5 44.4 2560.8 44.4 C2562.3 43.3 2563.6 41.9 2563.2 40.6 Z" fill="none" stroke="#666" stroke-width="1.3" stroke-linejoin="round"/><g stroke="#777" stroke-width="1.9" fill="none" stroke-linecap="round" stroke-linejoin="round"><path d="M2600.6 37.4 H2623.2 M2613.6 28.4 L2623.2 37.4 L2613.6 46.4"/><path d="M2626.8 26.4 V48.6"/></g><rect x="26.9" y="78.6" width="148.7" height="40" rx="20" fill="#fff" stroke="#d2d2d2" stroke-width="1.5"/><text x="60.6" y="106.8" font-size="20.3" fill="#555" text-anchor="start" font-weight="normal">Highlight</text><rect x="191.7" y="78" width="149.1" height="40.3" rx="20.1" fill="#52a770"/><text x="216.8" y="106.8" font-size="20.3" fill="#fff" text-anchor="start" font-weight="normal">Correlation</text><path d="M2095.1 89.2 H2114.4 L2106.9 98.4 V108 L2102.8 104.6 V98.4 Z" fill="none" stroke="#555" stroke-width="1.5" stroke-linejoin="round"/><path d="M2201.5 89.2 H2220.8 L2213.3 98.4 V108 L2209.2 104.6 V98.4 Z" fill="none" stroke="#555" stroke-width="1.5" stroke-linejoin="round"/><text x="2125.4" y="106.4" font-size="20.3" fill="#555" text-anchor="start" font-weight="normal">Rows</text><text x="2231.4" y="106.4" font-size="20.3" fill="#555" text-anchor="start" font-weight="normal">Columns</text><g stroke="#555" stroke-width="1.6" fill="none" stroke-linecap="round" stroke-linejoin="round"><path d="M2346.1 91.3 V105 M2340.8 96.4 L2346.1 91.3 L2351.4 96.4"/><path d="M2338.6 108 H2353.6"/><path d="M2388.2 90.8 V104.6 M2382.9 99.5 L2388.2 104.6 L2393.5 99.5"/><path d="M2380.6 108 H2395.6"/></g><path d="M2402.6 95.4 H2414.4 L2408.5 102.3 Z" fill="#444"/><text x="2443.4" y="106.4" font-size="20.3" fill="#555" text-anchor="start" font-weight="normal">Columns</text><rect x="2534.1" y="84.4" width="93.1" height="29.9" rx="4" fill="#fff" stroke="#cfcfcf" stroke-width="1.5"/><g stroke="#333" stroke-width="1.6" fill="none" stroke-linecap="round" stroke-linejoin="round"><path d="M2553.8 92.4 V106"/><path d="M2556 99.2 H2569.4 M2564.4 94.2 L2569.4 99.2 L2564.4 104.2"/></g><text x="2577.3" y="106.4" font-size="20.3" fill="#333" text-anchor="start" font-weight="normal">100</text><text x="27.2" y="161.9" font-size="20.3" fill="#fff" text-anchor="start" font-weight="normal">Column</text><rect x="107.6" y="134.6" width="208.6" height="37.5" rx="5" fill="#fff"/><rect x="122.9" y="146.4" width="21.1" height="14.2" rx="7.1" fill="#3d80d0"/><circle cx="137.1" cy="153.5" r="4.6" fill="#fff"/><text x="157.3" y="161" font-size="19" fill="#333" text-anchor="start" font-weight="normal">Attrition</text><text x="333.3" y="162" font-size="20.3" fill="#fff" text-anchor="start" font-weight="normal">Sort</text><rect x="377.5" y="134" width="189.3" height="37.6" rx="5" fill="#fff"/><line x1="497.5" y1="135" x2="497.5" y2="171" stroke="#c8c8c8" stroke-width="1.3"/><text x="394.8" y="160" font-size="19" fill="#333" text-anchor="start" font-weight="normal">AUC</text><text x="507.6" y="160" font-size="19" fill="#333" text-anchor="start" font-weight="normal">DESC</text><rect x="589" y="144.5" width="18" height="18" rx="3" fill="#fff" stroke="#666" stroke-width="1.5"/><text x="616.6" y="162" font-size="20.3" fill="#fff" text-anchor="start" font-weight="normal">Prediction</text><rect x="728.5" y="144.5" width="18" height="18" rx="3" fill="#fff" stroke="#666" stroke-width="1.5"/><text x="755.6" y="162" font-size="20.3" fill="#fff" text-anchor="start" font-weight="normal">Sync Y Axis</text><text x="879.5" y="162" font-size="20.3" fill="#fff" text-anchor="start" font-weight="normal">Sample</text><rect x="957" y="133.9" width="109.9" height="37.9" rx="5" fill="#fff"/><text x="973.7" y="160" font-size="19" fill="#333" text-anchor="start" font-weight="normal">All</text><circle cx="1100.9" cy="153.2" r="10.4" fill="none" stroke="#fff" stroke-width="1.4"/><path d="M1097.3 150.2 A3.7 3.7 0 1 1 1102.6 153.4 C1101.3 154.3 1100.9 155 1100.9 156.6" fill="none" stroke="#fff" stroke-width="1.4" stroke-linecap="round"/><circle cx="1100.9" cy="159.4" r="0.95" fill="#fff"/><g stroke="#fff" stroke-width="2.6" stroke-linecap="round"><path d="M2605.2 143.4 L2623.8 162 M2623.8 143.4 L2605.2 162"/></g></svg>
</body></html>
